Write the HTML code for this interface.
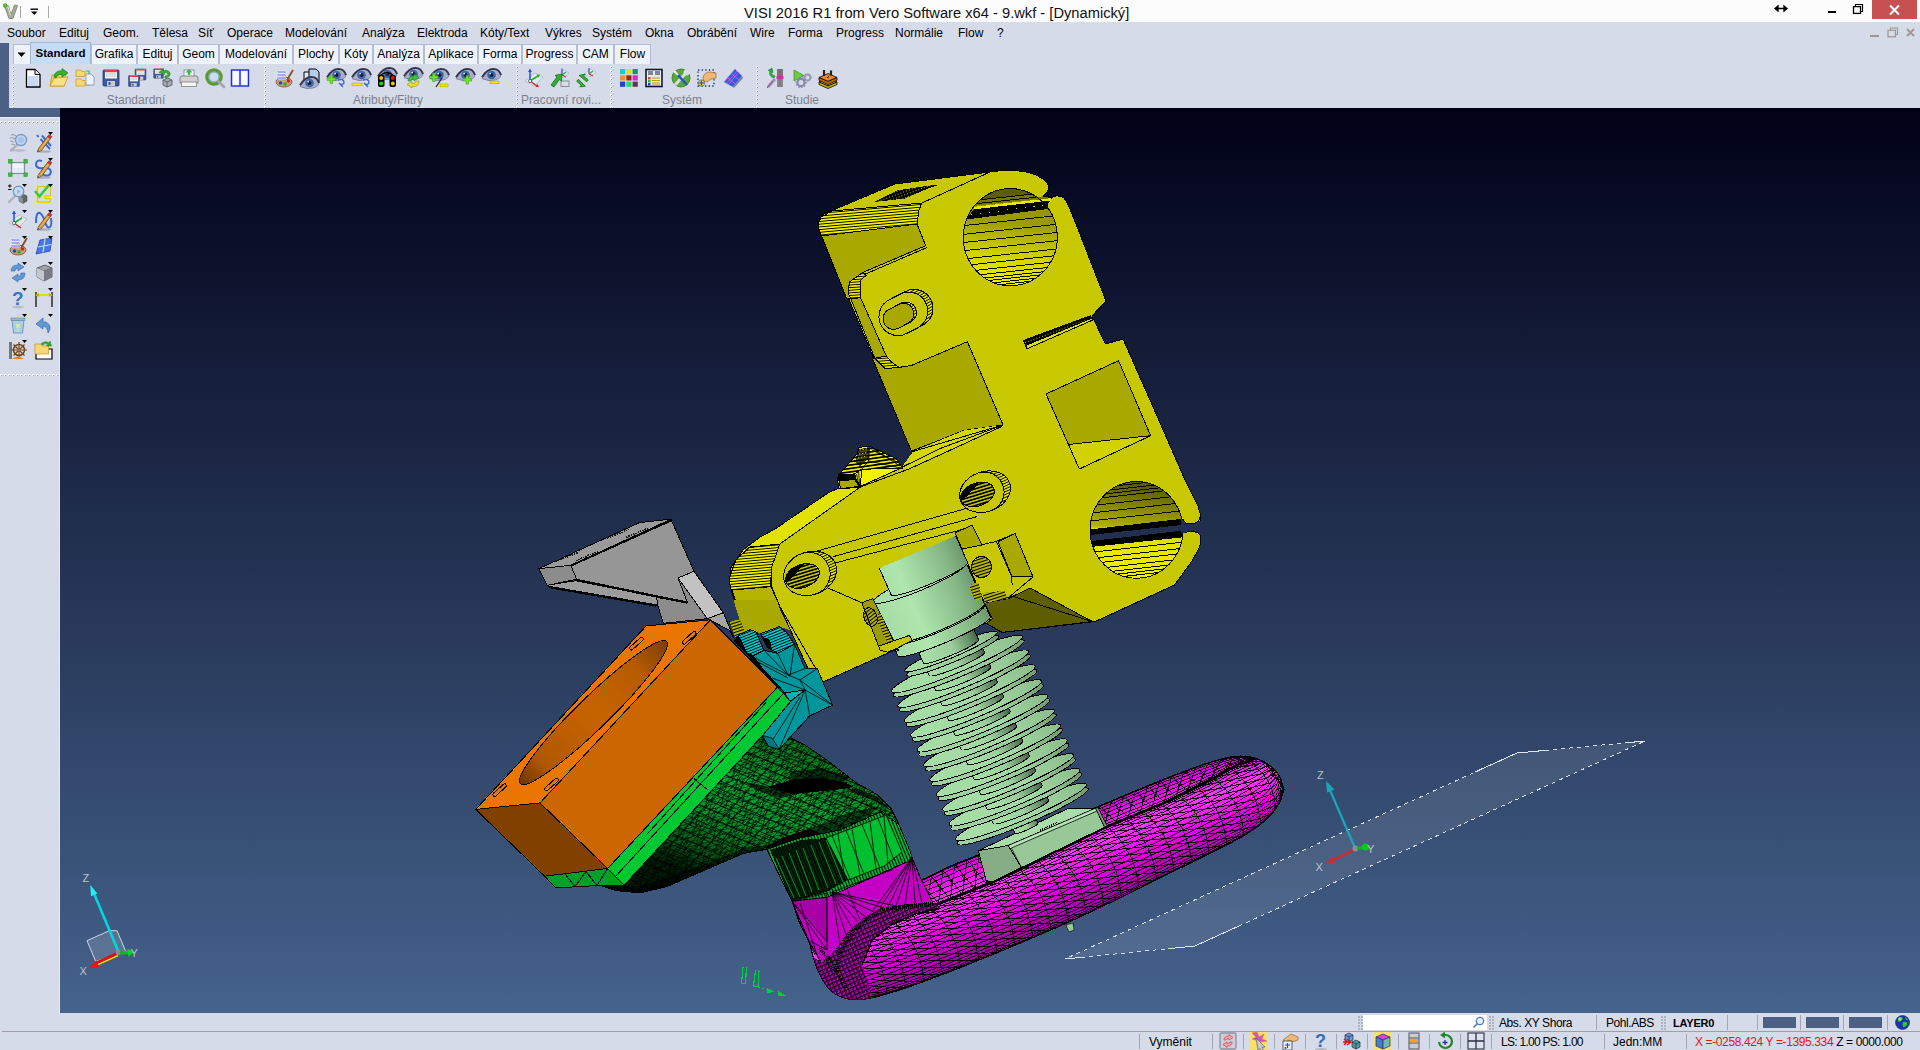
<!DOCTYPE html>
<html lang="cs">
<head>
<meta charset="utf-8">
<title>VISI 2016 R1 from Vero Software x64 - 9.wkf - [Dynamický]</title>
<style>
html,body{margin:0;padding:0;}
body{width:1920px;height:1050px;overflow:hidden;position:relative;background:#d6dbe9;font-family:"Liberation Sans","DejaVu Sans",sans-serif;font-size:12px;color:#000;}
.abs{position:absolute;}
#titlebar{left:0;top:0;width:1920px;height:22px;background:#fcfcfc;}
#title{left:744px;top:3px;font-size:14.7px;line-height:20px;color:#111;white-space:nowrap;}
.mi{position:absolute;top:26px;font-size:12px;line-height:14px;white-space:nowrap;color:#000;}
#leftstrip{left:0;top:43px;width:9px;height:65px;background:#4c6086;}
#leftpaneltop{left:0;top:108px;width:60px;height:9px;background:#4c6086;}
.tab{position:absolute;top:44px;height:20px;border:1px solid #b4bdd2;border-bottom:none;background:#eef3fb;font-size:12px;line-height:19px;text-align:center;white-space:nowrap;box-sizing:border-box;overflow:visible;}
.tab.sel{background:#c4dcf6;border-color:#a3b6cf;font-weight:bold;font-size:11.5px;top:42px;height:22px;line-height:20px;}
.grp{position:absolute;top:93px;font-size:12px;line-height:14px;color:#7c7f8a;white-space:nowrap;}
.grip{position:absolute;top:66px;width:2px;height:42px;background-image:repeating-linear-gradient(to bottom,rgba(0,0,0,0) 0,rgba(0,0,0,0) 2px,#d6dbe9 2px,#d6dbe9 4px),linear-gradient(135deg,#fff 50%,#9aa0b0 50%);background-size:auto,2px 2px;}
.hgrip{position:absolute;left:0;width:59px;height:2px;background-image:repeating-linear-gradient(to right,rgba(0,0,0,0) 0,rgba(0,0,0,0) 2px,#d6dbe9 2px,#d6dbe9 4px),linear-gradient(135deg,#fff 50%,#9aa0b0 50%);background-size:auto,2px 2px;}
#viewport{left:60px;top:108px;width:1860px;height:905px;background:linear-gradient(to bottom,#010118 0%,#45638c 100%);overflow:hidden;}
#statussep{left:2px;top:1031px;width:1918px;height:1px;background:#a0a0a0;}
.st{position:absolute;font-size:12px;line-height:14px;white-space:nowrap;}
.vsep{position:absolute;width:1px;height:15px;background:#a3a7b3;}
.sgrip{position:absolute;width:5px;height:14px;background-image:radial-gradient(circle at 1px 1px,#aeb3c2 0.7px,rgba(0,0,0,0) 1px);background-size:3px 3px;}
.brect{position:absolute;top:1017px;width:33px;height:11px;background:#4c6086;}
.ic{position:absolute;overflow:visible;}
</style>
</head>
<body>
<div id="titlebar" class="abs"></div>
<div id="title" class="abs">VISI 2016 R1 from Vero Software x64 - 9.wkf - [Dynamický]</div>
<div class="mi" style="left:7px">Soubor</div>
<div class="mi" style="left:59px">Edituj</div>
<div class="mi" style="left:103px">Geom.</div>
<div class="mi" style="left:152px">Tělesa</div>
<div class="mi" style="left:198px">Síť</div>
<div class="mi" style="left:227px">Operace</div>
<div class="mi" style="left:285px">Modelování</div>
<div class="mi" style="left:362px">Analýza</div>
<div class="mi" style="left:417px">Elektroda</div>
<div class="mi" style="left:480px">Kóty/Text</div>
<div class="mi" style="left:545px">Výkres</div>
<div class="mi" style="left:592px">Systém</div>
<div class="mi" style="left:645px">Okna</div>
<div class="mi" style="left:687px">Obrábění</div>
<div class="mi" style="left:750px">Wire</div>
<div class="mi" style="left:788px">Forma</div>
<div class="mi" style="left:836px">Progress</div>
<div class="mi" style="left:895px">Normálie</div>
<div class="mi" style="left:958px">Flow</div>
<div class="mi" style="left:997px">?</div>
<div id="leftstrip" class="abs"></div>
<div id="leftpaneltop" class="abs"></div>
<div class="tab" style="left:13px;width:18px;"></div>
<div class="tab sel" style="left:30px;width:61px">Standard</div>
<div class="tab" style="left:91px;width:46px">Grafika</div>
<div class="tab" style="left:137px;width:41px">Edituj</div>
<div class="tab" style="left:178px;width:41px">Geom</div>
<div class="tab" style="left:219px;width:74px">Modelování</div>
<div class="tab" style="left:293px;width:46px">Plochy</div>
<div class="tab" style="left:339px;width:34px">Kóty</div>
<div class="tab" style="left:373px;width:51px">Analýza</div>
<div class="tab" style="left:424px;width:54px">Aplikace</div>
<div class="tab" style="left:478px;width:44px">Forma</div>
<div class="tab" style="left:522px;width:55px">Progress</div>
<div class="tab" style="left:577px;width:37px">CAM</div>
<div class="tab" style="left:614px;width:37px">Flow</div>
<div class="grip" style="left:12px"></div>
<div class="grip" style="left:264px"></div>
<div class="grip" style="left:516px"></div>
<div class="grip" style="left:610px"></div>
<div class="grip" style="left:756px"></div>
<div class="grp" style="left:76px;width:120px;text-align:center">Standardní</div>
<div class="grp" style="left:328px;width:120px;text-align:center">Atributy/Filtry</div>
<div class="grp" style="left:501px;width:120px;text-align:center">Pracovní rovi...</div>
<div class="grp" style="left:622px;width:120px;text-align:center">Systém</div>
<div class="grp" style="left:742px;width:120px;text-align:center">Studie</div>
<div class="hgrip" style="top:121px"></div><div class="hgrip" style="top:374px"></div><div class="abs" style="left:59px;top:117px;width:1px;height:896px;background:#e6eaf4"></div><div class="abs" style="left:0;top:117px;width:60px;height:1px;background:#e6eaf4"></div>
<div id="statussep" class="abs"></div>
<div class="sgrip" style="left:1358px;top:1016px"></div><div class="abs" style="left:1363px;top:1015px;width:124px;height:15px;background:#fff"></div><div class="sgrip" style="left:1489px;top:1016px"></div>
<div class="st" style="left:1499px;top:1016px;letter-spacing:-0.42px">Abs. XY Shora</div>
<div class="vsep" style="left:1596px;top:1015px"></div>
<div class="st" style="left:1606px;top:1016px;letter-spacing:-0.43px">Pohl.ABS</div>
<div class="sgrip" style="left:1661px;top:1016px"></div>
<div class="st" style="left:1673px;top:1016px;font-weight:bold;font-size:11px;letter-spacing:-0.2px">LAYER0</div>
<div class="vsep" style="left:1727px;top:1015px"></div>
<div class="vsep" style="left:1757px;top:1015px"></div>
<div class="vsep" style="left:1800px;top:1015px"></div>
<div class="vsep" style="left:1843px;top:1015px"></div>
<div class="vsep" style="left:1887px;top:1015px"></div>
<div class="brect" style="left:1763px"></div>
<div class="brect" style="left:1806px"></div>
<div class="brect" style="left:1849px"></div>
<div class="vsep" style="left:1139px;top:1034px"></div>
<div class="vsep" style="left:1212px;top:1034px"></div>
<div class="vsep" style="left:1243px;top:1034px"></div>
<div class="vsep" style="left:1274px;top:1034px"></div>
<div class="vsep" style="left:1305px;top:1034px"></div>
<div class="vsep" style="left:1336px;top:1034px"></div>
<div class="vsep" style="left:1367px;top:1034px"></div>
<div class="vsep" style="left:1398px;top:1034px"></div>
<div class="vsep" style="left:1429px;top:1034px"></div>
<div class="vsep" style="left:1460px;top:1034px"></div>
<div class="vsep" style="left:1491px;top:1034px"></div>
<div class="vsep" style="left:1604px;top:1034px"></div>
<div class="vsep" style="left:1686px;top:1034px"></div>
<div class="st" style="left:1149px;top:1035px">Vyměnit</div>
<div class="st" style="left:1501px;top:1035px;letter-spacing:-0.72px">LS: 1.00 PS: 1.00</div>
<div class="st" style="left:1613px;top:1035px">Jedn:MM</div>
<div class="st" style="left:1695px;top:1035px;letter-spacing:-0.38px"><span style="color:#e8141c">X =-0258.424 Y =-1395.334</span> Z = 0000.000</div>
<div id="viewport" class="abs"><svg width="1860" height="905" viewBox="60 108 1860 905" style="position:absolute;left:0;top:0" shape-rendering="crispEdges"><defs>
<pattern id="hY" width="6" height="2.700" patternUnits="userSpaceOnUse" patternTransform="rotate(-5)"><rect width="6" height="2.700" fill="#ecec00"/><rect y="0" width="6" height="1.200" fill="#000"/></pattern>
<pattern id="hY2" width="6" height="2.600" patternUnits="userSpaceOnUse" patternTransform="rotate(-4)"><rect width="6" height="2.600" fill="#e4e400"/><rect y="0" width="6" height="1.100" fill="#000"/></pattern>
<pattern id="hD" width="3" height="3" patternUnits="userSpaceOnUse" patternTransform="rotate(-20)"><rect width="3" height="3" fill="#000"/><rect x="0" y="0" width="1" height="1" fill="#c8c800"/></pattern>
<pattern id="hHole" width="8" height="6" patternUnits="userSpaceOnUse" patternTransform="rotate(-11)"><rect y="0" width="8" height="1" fill="#000"/></pattern>
<pattern id="hScrew" width="8" height="3" patternUnits="userSpaceOnUse" patternTransform="rotate(-18)"><rect width="8" height="3" fill="#b4b400"/><rect y="0" width="8" height="1.3" fill="#000"/></pattern>
<linearGradient id="gHole1" x1="0" y1="0" x2="0.15" y2="1"><stop offset="0" stop-color="#7a7a00"/><stop offset="0.22" stop-color="#8c8c00"/><stop offset="0.4" stop-color="#a6a600"/><stop offset="0.65" stop-color="#d2d200"/><stop offset="1" stop-color="#f0f000"/></linearGradient>
<linearGradient id="gCyl" gradientUnits="userSpaceOnUse" x1="880" y1="620" x2="990" y2="574"><stop offset="0" stop-color="#a4dca4"/><stop offset="0.3" stop-color="#aee6ae"/><stop offset="0.7" stop-color="#86b886"/><stop offset="1" stop-color="#567e56"/></linearGradient>
<linearGradient id="gOr" gradientUnits="userSpaceOnUse" x1="560" y1="700" x2="640" y2="740"><stop offset="0" stop-color="#9a4d00"/><stop offset="1" stop-color="#c86400"/></linearGradient>
<pattern id="mG" width="7.500" height="7.500" patternUnits="userSpaceOnUse" patternTransform="rotate(24) skewX(-18)"><path d="M0 0H7.500M0 0V7.500M0 7.500L7.500 0" stroke="#000" stroke-width="0.800" fill="none"/></pattern><pattern id="mG3" width="17" height="11" patternUnits="userSpaceOnUse" patternTransform="rotate(-14)"><path d="M0 0L17 11M0 5.500L8.500 0M8.500 11L17 5.500M0 11L6 0M11 11L17 0" stroke="#000" stroke-width="0.800" fill="none"/></pattern>
<pattern id="mG2" width="3" height="8" patternUnits="userSpaceOnUse" patternTransform="rotate(-22)"><rect width="3" height="8" fill="#00b82e"/><path d="M0 0V8" stroke="#000" stroke-width="1.3" fill="none"/></pattern>
<pattern id="mM" width="7" height="7" patternUnits="userSpaceOnUse" patternTransform="rotate(-24)"><rect width="7" height="7" fill="#e000e0"/><path d="M0 0H7M0 0V7M0 7L7 0" stroke="#000" stroke-width="0.9" fill="none"/></pattern>
<pattern id="mM2" width="4" height="4" patternUnits="userSpaceOnUse" patternTransform="rotate(-24)"><rect width="4" height="4" fill="#c000c0"/><path d="M0 0H4M0 0V4M0 4L4 0" stroke="#000" stroke-width="0.9" fill="none"/></pattern>
<radialGradient id="gRing" gradientUnits="userSpaceOnUse" cx="1060" cy="860" r="260" gradientTransform="translate(1060 860) rotate(-24) scale(1 0.25) translate(-1060 -860)"><stop offset="0" stop-color="#ff30ff" stop-opacity="0.55"/><stop offset="1" stop-color="#a000a0" stop-opacity="0.35"/></radialGradient>
<linearGradient id="gFin" x1="0" y1="0" x2="1" y2="0"><stop offset="0" stop-color="#a6dea6"/><stop offset="0.6" stop-color="#a2d8a2"/><stop offset="1" stop-color="#8abc8a"/></linearGradient>
<linearGradient id="gCore" x1="0" y1="0.3" x2="1" y2="0"><stop offset="0" stop-color="#a6dea6"/><stop offset="0.45" stop-color="#9ace9a"/><stop offset="0.75" stop-color="#668e66"/><stop offset="1" stop-color="#2a422c"/></linearGradient>
<linearGradient id="gRim" x1="0" y1="0" x2="1" y2="0"><stop offset="0" stop-color="#9ed29e"/><stop offset="0.7" stop-color="#98cc98"/><stop offset="1" stop-color="#6c9a6c"/></linearGradient>
<linearGradient id="gOrH" x1="0" y1="0" x2="1" y2="0"><stop offset="0" stop-color="#6e3600"/><stop offset="0.15" stop-color="#b05800"/><stop offset="0.5" stop-color="#c66300"/><stop offset="0.8" stop-color="#b65b00"/><stop offset="1" stop-color="#7e3e00"/></linearGradient>
<linearGradient id="gRingHi" gradientUnits="userSpaceOnUse" x1="1000" y1="850" x2="1030" y2="925"><stop offset="0" stop-color="#e000e0"/><stop offset="0.35" stop-color="#ff38ff"/><stop offset="0.7" stop-color="#e000e0"/><stop offset="1" stop-color="#a800a8"/></linearGradient>
<pattern id="mC" width="6" height="2.6" patternUnits="userSpaceOnUse" patternTransform="rotate(-22)"><rect width="6" height="2.6" fill="#00c4cc"/><rect width="6" height="1.3" fill="#000"/></pattern>
<pattern id="hScrew0" width="8" height="3.2" patternUnits="userSpaceOnUse" patternTransform="rotate(3)"><rect width="8" height="3.2" fill="#c0c000"/><rect y="0" width="8" height="1.900" fill="#000"/></pattern>
<linearGradient id="gDuct" gradientUnits="userSpaceOnUse" x1="775" y1="745" x2="725" y2="885"><stop offset="0" stop-color="#00801e"/><stop offset="0.3" stop-color="#00a630"/><stop offset="0.55" stop-color="#00982c"/><stop offset="0.8" stop-color="#006418"/><stop offset="1" stop-color="#001c06"/></linearGradient>
<pattern id="hPyr" width="8" height="3.400" patternUnits="userSpaceOnUse" patternTransform="rotate(-8)"><rect width="8" height="3.400" fill="#f0f000"/><rect width="8" height="1.400" fill="#000"/></pattern>
<linearGradient id="gHoleA" x1="0.1" y1="0" x2="0" y2="1"><stop offset="0" stop-color="#8e8e00"/><stop offset="0.3" stop-color="#9c9c00"/><stop offset="0.45" stop-color="#b4b400"/><stop offset="0.65" stop-color="#d2d200"/><stop offset="0.85" stop-color="#e6e600"/><stop offset="1" stop-color="#f0f000"/></linearGradient>
<linearGradient id="gHoleB" x1="0.1" y1="0" x2="0" y2="1"><stop offset="0" stop-color="#5a5a00"/><stop offset="0.15" stop-color="#787800"/><stop offset="0.3" stop-color="#949400"/><stop offset="0.45" stop-color="#b0b000"/><stop offset="0.5" stop-color="#e0e000"/><stop offset="1" stop-color="#f2f200"/></linearGradient>
</defs>
<!-- work plane -->
<g id="plane">
<polygon points="1065,959 1195,946 1645,741 1517,753" fill="#ffffff" fill-opacity="0.09" stroke="none"/>
<path d="M1065 959L1195 946M1195 946L1645 741M1645 741L1517 753M1517 753L1065 959" stroke="#d8dce4" stroke-width="1" stroke-dasharray="4 4" fill="none"/>
<path d="M1065 959L1085 957M1170 948.5L1195 946L1240 925.5M1645 741L1625 743M1545 750.5L1517 753L1475 772" stroke="#dfe3ea" stroke-width="1" fill="none"/>
</g>
<g id="ring">
<clipPath id="cRing"><path d="M792.0 901.0 L795.0 900.4 L801.0 899.3 L810.0 897.6 L822.0 895.4 L833.5 893.4 L844.5 891.8 L855.0 890.5 L865.0 889.5 L875.0 888.4 L885.0 887.1 L894.9 885.7 L904.9 884.2 L914.0 882.1 L922.2 879.6 L929.5 876.5 L936.0 873.0 L943.0 869.5 L950.5 866.1 L958.5 862.7 L967.0 859.5 L977.1 855.5 L988.9 850.8 L1002.3 845.4 L1017.4 839.2 L1032.2 833.2 L1046.9 827.3 L1061.3 821.4 L1075.6 815.8 L1088.8 810.4 L1101.1 805.3 L1112.5 800.6 L1122.9 796.1 L1134.0 791.5 L1145.7 786.7 L1158.0 781.7 L1171.1 776.4 L1183.1 771.8 L1194.2 767.7 L1204.3 764.2 L1213.4 761.3 L1221.6 759.0 L1228.7 757.4 L1234.9 756.4 L1240.1 756.1 L1245.1 756.2 L1250.0 756.9 L1254.7 758.0 L1259.3 759.7 L1263.5 761.6 L1267.4 763.9 L1271.0 766.5 L1274.3 769.5 L1277.0 772.7 L1279.3 776.1 L1281.0 779.7 L1282.1 783.7 L1283.0 786.6 L1283.6 788.5 L1283.9 789.5 L1283.6 790.5 L1283.0 792.4 L1282.1 795.3 L1281.0 799.3 L1279.1 803.3 L1276.6 807.5 L1273.3 811.9 L1269.4 816.5 L1264.3 821.2 L1258.1 826.1 L1250.8 831.1 L1242.4 836.4 L1232.0 842.2 L1219.6 848.7 L1205.3 855.9 L1189.0 863.7 L1171.9 872.0 L1154.0 880.8 L1135.3 890.1 L1115.8 899.8 L1096.3 909.3 L1076.7 918.4 L1057.2 927.2 L1037.6 935.6 L1018.1 943.9 L998.5 952.1 L979.0 960.0 L959.5 967.9 L941.6 974.8 L925.3 980.9 L910.7 986.2 L897.6 990.6 L886.2 994.1 L876.4 996.8 L868.1 998.6 L861.5 999.6 L855.2 999.8 L849.4 999.3 L844.0 998.0 L839.0 996.0 L834.6 993.5 L830.7 990.5 L827.4 987.0 L824.6 983.0 L822.1 978.9 L819.9 974.7 L817.9 970.4 L816.1 966.1 L814.6 961.6 L813.2 957.2 L812.0 952.7 L811.0 948.1 L809.7 943.7 L808.0 939.4 L805.9 935.2 L803.6 931.1 L801.3 926.6 L799.1 921.5 L797.0 916.0 L795.0 910.0 L793.5 905.5 L792.5 902.5 L792.0 901.0 Z"/></clipPath>
<path d="M792.0 901.0 L795.0 900.4 L801.0 899.3 L810.0 897.6 L822.0 895.4 L833.5 893.4 L844.5 891.8 L855.0 890.5 L865.0 889.5 L875.0 888.4 L885.0 887.1 L894.9 885.7 L904.9 884.2 L914.0 882.1 L922.2 879.6 L929.5 876.5 L936.0 873.0 L943.0 869.5 L950.5 866.1 L958.5 862.7 L967.0 859.5 L977.1 855.5 L988.9 850.8 L1002.3 845.4 L1017.4 839.2 L1032.2 833.2 L1046.9 827.3 L1061.3 821.4 L1075.6 815.8 L1088.8 810.4 L1101.1 805.3 L1112.5 800.6 L1122.9 796.1 L1134.0 791.5 L1145.7 786.7 L1158.0 781.7 L1171.1 776.4 L1183.1 771.8 L1194.2 767.7 L1204.3 764.2 L1213.4 761.3 L1221.6 759.0 L1228.7 757.4 L1234.9 756.4 L1240.1 756.1 L1245.1 756.2 L1250.0 756.9 L1254.7 758.0 L1259.3 759.7 L1263.5 761.6 L1267.4 763.9 L1271.0 766.5 L1274.3 769.5 L1277.0 772.7 L1279.3 776.1 L1281.0 779.7 L1282.1 783.7 L1283.0 786.6 L1283.6 788.5 L1283.9 789.5 L1283.6 790.5 L1283.0 792.4 L1282.1 795.3 L1281.0 799.3 L1279.1 803.3 L1276.6 807.5 L1273.3 811.9 L1269.4 816.5 L1264.3 821.2 L1258.1 826.1 L1250.8 831.1 L1242.4 836.4 L1232.0 842.2 L1219.6 848.7 L1205.3 855.9 L1189.0 863.7 L1171.9 872.0 L1154.0 880.8 L1135.3 890.1 L1115.8 899.8 L1096.3 909.3 L1076.7 918.4 L1057.2 927.2 L1037.6 935.6 L1018.1 943.9 L998.5 952.1 L979.0 960.0 L959.5 967.9 L941.6 974.8 L925.3 980.9 L910.7 986.2 L897.6 990.6 L886.2 994.1 L876.4 996.8 L868.1 998.6 L861.5 999.6 L855.2 999.8 L849.4 999.3 L844.0 998.0 L839.0 996.0 L834.6 993.5 L830.7 990.5 L827.4 987.0 L824.6 983.0 L822.1 978.9 L819.9 974.7 L817.9 970.4 L816.1 966.1 L814.6 961.6 L813.2 957.2 L812.0 952.7 L811.0 948.1 L809.7 943.7 L808.0 939.4 L805.9 935.2 L803.6 931.1 L801.3 926.6 L799.1 921.5 L797.0 916.0 L795.0 910.0 L793.5 905.5 L792.5 902.5 L792.0 901.0 Z" fill="#d400d4" stroke="none"/>
<g clip-path="url(#cRing)">
<path d="M792.0 901.0 L795.0 900.4 L801.0 899.3 L810.0 897.6 L822.0 895.4 L833.5 893.4 L844.5 891.8 L855.0 890.5 L865.0 889.5 L875.0 888.4 L885.0 887.1 L894.9 885.7 L904.9 884.2 L914.0 882.1 L922.2 879.6 L929.5 876.5 L936.0 873.0 L943.0 869.5 L950.5 866.1 L958.5 862.7 L967.0 859.5 L977.1 855.5 L988.9 850.8 L1002.3 845.4 L1017.4 839.2 L1032.2 833.2 L1046.9 827.3 L1061.3 821.4 L1075.6 815.8 L1088.8 810.4 L1101.1 805.3 L1112.5 800.6 L1122.9 796.1 L1134.0 791.5 L1145.7 786.7 L1158.0 781.7 L1171.1 776.4 L1183.1 771.8 L1194.2 767.7 L1204.3 764.2 L1213.4 761.3 L1221.6 759.0 L1228.7 757.4 L1234.9 756.4 L1240.1 756.1 L1245.1 756.2 L1250.0 756.9 L1254.7 758.0 L1259.3 759.7 L1263.5 761.6 L1267.4 763.9 L1271.0 766.5 L1274.3 769.5 L1277.0 772.7 L1279.3 776.1 L1281.0 779.7 L1282.1 783.7 L1283.0 786.6 L1283.6 788.5 L1283.9 789.5 L1283.6 790.5 L1283.0 792.4 L1282.1 795.3 L1281.0 799.3 L1279.1 803.3 L1276.6 807.5 L1273.3 811.9 L1269.4 816.5 L1264.3 821.2 L1258.1 826.1 L1250.8 831.1 L1242.4 836.4 L1232.0 842.2 L1219.6 848.7 L1205.3 855.9 L1189.0 863.7 L1171.9 872.0 L1154.0 880.8 L1135.3 890.1 L1115.8 899.8 L1096.3 909.3 L1076.7 918.4 L1057.2 927.2 L1037.6 935.6 L1018.1 943.9 L998.5 952.1 L979.0 960.0 L959.5 967.9 L941.6 974.8 L925.3 980.9 L910.7 986.2 L897.6 990.6 L886.2 994.1 L876.4 996.8 L868.1 998.6 L861.5 999.6 L855.2 999.8 L849.4 999.3 L844.0 998.0 L839.0 996.0 L834.6 993.5 L830.7 990.5 L827.4 987.0 L824.6 983.0 L822.1 978.9 L819.9 974.7 L817.9 970.4 L816.1 966.1 L814.6 961.6 L813.2 957.2 L812.0 952.7 L811.0 948.1 L809.7 943.7 L808.0 939.4 L805.9 935.2 L803.6 931.1 L801.3 926.6 L799.1 921.5 L797.0 916.0 L795.0 910.0 L793.5 905.5 L792.5 902.5 L792.0 901.0 Z" fill="url(#gRingHi)" stroke="none"/>
<path d="M832.9 946.1 L840.4 943.1 L847.9 940.1 L855.4 937.1 L862.9 934.0 L870.4 931.0 L877.9 928.0 L885.4 925.0 L892.9 921.9 L900.4 918.9 L907.9 915.9 L915.4 912.9 L922.9 909.8 L930.5 906.9 L938.0 903.9 L945.5 900.9 L953.0 897.9 L960.5 894.9 L968.0 891.9 L975.5 888.9 L983.0 885.9 L990.5 882.9 L997.9 879.6 L1005.3 876.3 L1012.6 872.9 L1020.0 869.5 L1027.3 866.0 L1034.6 862.4 L1041.8 858.8 L1049.1 855.2 L1056.4 851.6 L1063.6 848.0 L1070.9 844.4 L1078.2 840.8 L1085.4 837.2 L1092.7 833.5 L1100.0 829.9 L1107.3 826.5 L1114.8 823.4 L1122.2 820.3 L1129.7 817.2 L1137.2 814.2 L1144.7 811.1 L1152.1 808.0 L1159.6 804.9 L1167.0 801.7 L1174.3 798.0 L1181.5 794.4 L1188.8 790.8 L1196.1 787.2 L1203.3 783.6 L1210.6 779.9 L1217.8 776.2 L1224.8 772.0 L1231.9 768.0 L1239.4 765.0 L1246.9 762.0 L1254.4 758.9 L1261.9 755.9 L1269.4 752.8 M833.2 946.9 L840.8 944.0 L848.3 941.0 L855.8 938.0 L863.3 935.0 L870.8 931.9 L878.3 928.9 L885.8 925.9 L893.3 922.9 L900.8 919.9 L908.3 916.8 L915.8 913.8 L923.3 910.8 L930.9 907.9 L938.4 904.9 L945.9 901.9 L953.4 898.9 L960.9 895.9 L968.4 892.9 L975.9 889.9 L983.4 886.9 L990.9 883.9 L998.3 880.6 L1005.7 877.2 L1013.0 873.8 L1020.4 870.5 L1027.7 866.9 L1034.9 863.3 L1042.2 859.7 L1049.5 856.1 L1056.8 852.5 L1064.0 848.9 L1071.3 845.3 L1078.6 841.7 L1085.8 838.1 L1093.1 834.5 L1100.4 830.9 L1107.7 827.5 L1115.2 824.4 L1122.6 821.3 L1130.1 818.2 L1137.6 815.1 L1145.0 812.0 L1152.5 808.9 L1160.0 805.8 L1167.4 802.6 L1174.7 799.0 L1181.9 795.4 L1189.2 791.7 L1196.4 788.1 L1203.7 784.5 L1210.9 780.9 L1218.2 777.2 L1225.2 772.9 L1232.3 768.9 L1239.8 765.9 L1247.3 762.8 L1254.7 759.7 L1262.2 756.5 L1269.6 753.3 M833.8 948.3 L841.3 945.4 L848.9 942.4 L856.4 939.4 L863.9 936.5 L871.4 933.5 L878.9 930.4 L886.4 927.4 L893.9 924.4 L901.4 921.4 L908.9 918.4 L916.4 915.4 L923.9 912.4 L931.5 909.5 L939.0 906.5 L946.5 903.5 L954.0 900.5 L961.5 897.5 L969.0 894.5 L976.5 891.5 L984.0 888.4 L991.5 885.4 L998.9 882.2 L1006.3 878.8 L1013.7 875.4 L1021.0 872.0 L1028.3 868.5 L1035.6 864.9 L1042.9 861.3 L1050.1 857.7 L1057.4 854.1 L1064.7 850.6 L1071.9 847.0 L1079.2 843.4 L1086.5 839.8 L1093.7 836.2 L1101.0 832.6 L1108.3 829.1 L1115.8 826.0 L1123.3 822.9 L1130.7 819.8 L1138.2 816.7 L1145.7 813.6 L1153.1 810.5 L1160.6 807.4 L1168.0 804.1 L1175.3 800.5 L1182.5 796.9 L1189.8 793.3 L1197.0 789.6 L1204.3 786.0 L1211.6 782.4 L1218.8 778.7 L1225.8 774.4 L1232.9 770.4 L1240.4 767.3 L1247.8 764.2 L1255.2 761.0 L1262.6 757.7 L1270.0 754.3 M834.5 950.1 L842.1 947.3 L849.7 944.4 L857.2 941.5 L864.7 938.5 L872.2 935.5 L879.8 932.5 L887.3 929.6 L894.8 926.6 L902.3 923.5 L909.8 920.5 L917.3 917.5 L924.8 914.5 L932.4 911.6 L939.9 908.6 L947.4 905.6 L954.9 902.6 L962.4 899.6 L969.9 896.6 L977.4 893.6 L984.9 890.6 L992.4 887.6 L999.8 884.3 L1007.2 880.9 L1014.5 877.6 L1021.9 874.2 L1029.2 870.7 L1036.5 867.1 L1043.7 863.5 L1051.0 859.9 L1058.3 856.4 L1065.6 852.8 L1072.8 849.2 L1080.1 845.6 L1087.4 842.0 L1094.6 838.4 L1101.9 834.8 L1109.2 831.3 L1116.7 828.2 L1124.1 825.1 L1131.6 822.0 L1139.1 818.8 L1146.5 815.7 L1154.0 812.6 L1161.5 809.5 L1168.9 806.2 L1176.1 802.6 L1183.4 799.0 L1190.6 795.4 L1197.9 791.7 L1205.1 788.1 L1212.4 784.5 L1219.6 780.7 L1226.6 776.5 L1233.7 772.5 L1241.2 769.3 L1248.6 766.1 L1255.9 762.7 L1263.3 759.2 L1270.5 755.5 M835.5 952.4 L843.1 949.7 L850.7 946.9 L858.2 944.0 L865.8 941.1 L873.3 938.1 L880.8 935.2 L888.3 932.2 L895.9 929.2 L903.4 926.2 L910.9 923.2 L918.4 920.2 L925.9 917.2 L933.4 914.3 L940.9 911.3 L948.5 908.3 L956.0 905.3 L963.5 902.3 L971.0 899.3 L978.5 896.3 L986.0 893.3 L993.5 890.2 L1000.9 887.0 L1008.3 883.6 L1015.6 880.3 L1023.0 876.9 L1030.3 873.4 L1037.6 869.8 L1044.9 866.3 L1052.1 862.7 L1059.4 859.1 L1066.7 855.5 L1074.0 852.0 L1081.2 848.4 L1088.5 844.8 L1095.8 841.2 L1103.0 837.6 L1110.4 834.1 L1117.8 831.0 L1125.3 827.8 L1132.7 824.7 L1140.2 821.5 L1147.6 818.4 L1155.1 815.2 L1162.5 812.1 L1169.9 808.8 L1177.2 805.2 L1184.4 801.6 L1191.7 798.0 L1199.0 794.4 L1206.2 790.7 L1213.4 787.1 L1220.7 783.3 L1227.7 779.1 L1234.8 775.0 L1242.2 771.8 L1249.5 768.4 L1256.8 764.9 L1264.1 761.2 L1271.1 757.1 M836.6 955.1 L844.2 952.6 L851.9 949.8 L859.4 947.0 L867.0 944.1 L874.5 941.2 L882.1 938.3 L889.6 935.3 L897.1 932.3 L904.6 929.4 L912.1 926.4 L919.7 923.4 L927.2 920.4 L934.7 917.5 L942.2 914.5 L949.7 911.5 L957.2 908.5 L964.7 905.4 L972.2 902.4 L979.8 899.4 L987.3 896.4 L994.8 893.4 L1002.2 890.1 L1009.5 886.8 L1016.9 883.4 L1024.3 880.1 L1031.6 876.6 L1038.9 873.1 L1046.2 869.5 L1053.4 865.9 L1060.7 862.4 L1068.0 858.8 L1075.3 855.2 L1082.6 851.6 L1089.8 848.1 L1097.1 844.5 L1104.4 840.8 L1111.7 837.4 L1119.1 834.2 L1126.6 831.0 L1134.0 827.9 L1141.4 824.7 L1148.9 821.5 L1156.3 818.4 L1163.8 815.2 L1171.2 811.9 L1178.4 808.3 L1185.7 804.7 L1192.9 801.1 L1200.2 797.5 L1207.4 793.8 L1214.7 790.1 L1221.9 786.4 L1228.9 782.1 L1236.0 778.1 L1243.3 774.7 L1250.6 771.2 L1257.9 767.5 L1265.0 763.5 L1271.9 758.9 M837.8 958.2 L845.5 955.8 L853.2 953.1 L860.8 950.4 L868.4 947.5 L875.9 944.7 L883.5 941.8 L891.0 938.8 L898.5 935.9 L906.1 932.9 L913.6 929.9 L921.1 926.9 L928.6 923.9 L936.2 921.0 L943.7 918.0 L951.2 915.0 L958.7 912.0 L966.2 909.0 L973.7 906.0 L981.2 903.0 L988.7 900.0 L996.2 896.9 L1003.6 893.7 L1011.0 890.4 L1018.4 887.0 L1025.7 883.7 L1033.0 880.2 L1040.3 876.7 L1047.6 873.2 L1054.9 869.6 L1062.2 866.1 L1069.5 862.5 L1076.8 858.9 L1084.0 855.4 L1091.3 851.8 L1098.6 848.2 L1105.9 844.6 L1113.2 841.1 L1120.6 837.9 L1128.0 834.7 L1135.5 831.5 L1142.9 828.3 L1150.3 825.1 L1157.7 821.9 L1165.2 818.7 L1172.6 815.4 L1179.8 811.8 L1187.1 808.2 L1194.4 804.6 L1201.6 801.0 L1208.9 797.3 L1216.1 793.6 L1223.3 789.9 L1230.3 785.6 L1237.4 781.5 L1244.7 778.0 L1251.9 774.4 L1259.1 770.4 L1266.0 766.1 L1272.7 761.1 M839.2 961.6 L847.0 959.3 L854.7 956.8 L862.3 954.1 L869.9 951.3 L877.5 948.5 L885.0 945.6 L892.6 942.7 L900.1 939.8 L907.6 936.8 L915.2 933.8 L922.7 930.9 L930.2 927.9 L937.7 925.0 L945.3 922.0 L952.8 919.0 L960.3 916.0 L967.8 913.0 L975.3 909.9 L982.8 906.9 L990.3 903.9 L997.8 900.9 L1005.2 897.6 L1012.6 894.3 L1019.9 891.0 L1027.3 887.6 L1034.6 884.2 L1042.0 880.7 L1049.3 877.2 L1056.6 873.7 L1063.8 870.1 L1071.1 866.6 L1078.4 863.0 L1085.7 859.4 L1093.0 855.8 L1100.2 852.3 L1107.5 848.6 L1114.8 845.1 L1122.2 841.9 L1129.6 838.7 L1137.1 835.4 L1144.5 832.2 L1151.9 829.0 L1159.3 825.8 L1166.7 822.6 L1174.1 819.2 L1181.4 815.6 L1188.7 812.1 L1195.9 808.4 L1203.2 804.8 L1210.4 801.1 L1217.6 797.4 L1224.8 793.6 L1231.8 789.4 L1238.9 785.2 L1246.1 781.6 L1253.3 777.8 L1260.3 773.6 L1267.2 769.0 L1273.6 763.4 M840.6 965.2 L848.5 963.1 L856.2 960.7 L863.9 958.1 L871.5 955.3 L879.1 952.5 L886.7 949.7 L894.2 946.8 L901.8 943.9 L909.3 941.0 L916.8 938.0 L924.4 935.1 L931.9 932.1 L939.4 929.2 L946.9 926.2 L954.5 923.2 L962.0 920.2 L969.5 917.1 L977.0 914.1 L984.5 911.1 L992.0 908.1 L999.5 905.0 L1006.9 901.8 L1014.3 898.5 L1021.6 895.2 L1029.0 891.9 L1036.4 888.4 L1043.7 885.0 L1051.0 881.5 L1058.3 878.0 L1065.6 874.4 L1072.9 870.9 L1080.2 867.4 L1087.4 863.8 L1094.7 860.2 L1102.0 856.6 L1109.3 853.0 L1116.6 849.5 L1124.0 846.2 L1131.4 842.9 L1138.8 839.7 L1146.2 836.4 L1153.6 833.2 L1161.0 829.9 L1168.4 826.7 L1175.8 823.3 L1183.0 819.7 L1190.3 816.2 L1197.6 812.5 L1204.8 808.9 L1212.1 805.2 L1219.3 801.5 L1226.5 797.7 L1233.5 793.4 L1240.5 789.2 L1247.7 785.5 L1254.8 781.5 L1261.7 777.1 L1268.4 772.0 L1274.6 765.8 M842.1 969.0 L850.1 967.1 L857.9 964.7 L865.6 962.2 L873.2 959.5 L880.8 956.8 L888.4 954.0 L896.0 951.1 L903.5 948.2 L911.1 945.3 L918.6 942.4 L926.1 939.4 L933.7 936.5 L941.2 933.5 L948.7 930.6 L956.2 927.5 L963.7 924.5 L971.2 921.5 L978.7 918.5 L986.2 915.5 L993.7 912.4 L1001.2 909.4 L1008.6 906.1 L1016.0 902.9 L1023.4 899.6 L1030.8 896.3 L1038.1 892.9 L1045.5 889.4 L1052.8 885.9 L1060.1 882.4 L1067.4 878.9 L1074.7 875.4 L1082.0 871.9 L1089.3 868.3 L1096.6 864.7 L1103.8 861.1 L1111.1 857.5 L1118.4 854.0 L1125.8 850.7 L1133.2 847.4 L1140.5 844.1 L1147.9 840.8 L1155.3 837.5 L1162.7 834.2 L1170.1 830.9 L1177.5 827.6 L1184.8 824.0 L1192.0 820.4 L1199.3 816.8 L1206.5 813.2 L1213.8 809.5 L1221.0 805.8 L1228.2 801.9 L1235.2 797.7 L1242.2 793.4 L1249.3 789.5 L1256.4 785.4 L1263.2 780.6 L1269.7 775.2 L1275.7 768.4 M843.7 972.8 L851.7 971.1 L859.5 968.9 L867.3 966.4 L874.9 963.8 L882.6 961.1 L890.2 958.3 L897.7 955.5 L905.3 952.6 L912.9 949.8 L920.4 946.8 L927.9 943.9 L935.5 940.9 L943.0 938.0 L950.5 935.0 L958.0 932.0 L965.5 929.0 L973.0 926.0 L980.5 923.0 L988.0 919.9 L995.5 916.9 L1003.0 913.8 L1010.4 910.6 L1017.8 907.3 L1025.2 904.0 L1032.6 900.8 L1040.0 897.4 L1047.3 893.9 L1054.6 890.5 L1061.9 887.0 L1069.3 883.5 L1076.6 880.0 L1083.9 876.5 L1091.1 872.9 L1098.4 869.4 L1105.7 865.8 L1113.0 862.2 L1120.2 858.6 L1127.6 855.3 L1135.0 851.9 L1142.4 848.6 L1149.7 845.3 L1157.1 841.9 L1164.5 838.6 L1171.9 835.3 L1179.2 831.9 L1186.5 828.4 L1193.8 824.8 L1201.1 821.2 L1208.3 817.5 L1215.5 813.8 L1222.7 810.1 L1229.9 806.2 L1236.9 802.0 L1243.9 797.7 L1251.0 793.7 L1257.9 789.3 L1264.6 784.3 L1271.0 778.5 L1276.7 771.0 M845.2 976.6 L853.3 975.1 L861.2 973.0 L869.0 970.6 L876.7 968.1 L884.3 965.4 L891.9 962.7 L899.5 959.9 L907.1 957.1 L914.7 954.2 L922.2 951.3 L929.7 948.4 L937.3 945.4 L944.8 942.5 L952.3 939.5 L959.8 936.5 L967.3 933.5 L974.8 930.4 L982.3 927.4 L989.8 924.4 L997.3 921.3 L1004.8 918.2 L1012.2 915.0 L1019.6 911.8 L1027.0 908.5 L1034.4 905.2 L1041.8 901.9 L1049.1 898.5 L1056.5 895.0 L1063.8 891.6 L1071.1 888.1 L1078.4 884.6 L1085.7 881.1 L1093.0 877.6 L1100.3 874.0 L1107.6 870.4 L1114.8 866.8 L1122.1 863.2 L1129.5 859.9 L1136.8 856.5 L1144.2 853.1 L1151.5 849.7 L1158.9 846.4 L1166.3 843.0 L1173.6 839.7 L1181.0 836.3 L1188.3 832.7 L1195.6 829.2 L1202.8 825.5 L1210.1 821.9 L1217.3 818.2 L1224.5 814.4 L1231.6 810.6 L1238.6 806.3 L1245.6 802.0 L1252.7 797.8 L1259.5 793.2 L1266.1 787.9 L1272.3 781.7 L1277.8 773.6 M846.7 980.4 L854.9 979.0 L862.8 977.1 L870.6 974.8 L878.4 972.3 L886.0 969.7 L893.6 967.0 L901.3 964.2 L908.8 961.4 L916.4 958.5 L924.0 955.6 L931.5 952.7 L939.0 949.8 L946.6 946.8 L954.1 943.9 L961.6 940.9 L969.1 937.8 L976.6 934.8 L984.1 931.8 L991.6 928.7 L999.1 925.7 L1006.5 922.6 L1014.0 919.4 L1021.4 916.2 L1028.8 912.9 L1036.2 909.6 L1043.6 906.3 L1050.9 902.9 L1058.3 899.5 L1065.6 896.1 L1072.9 892.6 L1080.2 889.1 L1087.6 885.6 L1094.8 882.1 L1102.1 878.5 L1109.4 875.0 L1116.7 871.3 L1123.9 867.8 L1131.3 864.4 L1138.6 860.9 L1146.0 857.5 L1153.3 854.1 L1160.7 850.7 L1168.0 847.3 L1175.4 844.0 L1182.7 840.5 L1190.0 837.0 L1197.3 833.4 L1204.5 829.8 L1211.8 826.2 L1219.0 822.5 L1226.2 818.7 L1233.4 814.8 L1240.3 810.5 L1247.3 806.1 L1254.3 801.8 L1261.1 797.1 L1267.6 791.5 L1273.6 784.9 L1278.8 776.2 M848.2 984.0 L856.5 982.8 L864.4 980.9 L872.2 978.7 L880.0 976.3 L887.7 973.7 L895.3 971.1 L902.9 968.3 L910.5 965.5 L918.1 962.7 L925.6 959.8 L933.2 956.9 L940.7 954.0 L948.3 951.0 L955.8 948.1 L963.3 945.1 L970.8 942.0 L978.3 939.0 L985.8 936.0 L993.3 932.9 L1000.7 929.8 L1008.2 926.8 L1015.7 923.6 L1023.1 920.3 L1030.5 917.1 L1037.9 913.9 L1045.3 910.6 L1052.7 907.2 L1060.0 903.8 L1067.3 900.4 L1074.7 896.9 L1082.0 893.5 L1089.3 890.0 L1096.6 886.4 L1103.9 882.9 L1111.2 879.3 L1118.4 875.7 L1125.7 872.1 L1133.0 868.7 L1140.3 865.2 L1147.7 861.8 L1155.0 858.3 L1162.3 854.9 L1169.7 851.5 L1177.0 848.1 L1184.4 844.6 L1191.7 841.1 L1198.9 837.6 L1206.2 833.9 L1213.4 830.3 L1220.7 826.5 L1227.8 822.7 L1235.0 818.8 L1242.0 814.5 L1248.9 810.1 L1255.8 805.7 L1262.6 800.8 L1268.9 794.9 L1274.8 787.9 L1279.8 778.6 M849.6 987.4 L857.9 986.4 L865.9 984.6 L873.7 982.4 L881.5 980.1 L889.2 977.5 L896.8 974.9 L904.5 972.2 L912.1 969.4 L919.7 966.6 L927.2 963.7 L934.8 960.8 L942.3 957.9 L949.8 955.0 L957.4 952.0 L964.9 949.0 L972.4 946.0 L979.9 942.9 L987.4 939.9 L994.8 936.8 L1002.3 933.7 L1009.8 930.7 L1017.2 927.5 L1024.7 924.3 L1032.1 921.1 L1039.5 917.8 L1046.9 914.5 L1054.3 911.2 L1061.6 907.8 L1069.0 904.4 L1076.3 901.0 L1083.6 897.5 L1090.9 894.1 L1098.2 890.5 L1105.5 887.0 L1112.8 883.4 L1120.1 879.8 L1127.3 876.2 L1134.6 872.7 L1142.0 869.2 L1149.3 865.7 L1156.6 862.3 L1163.9 858.8 L1171.2 855.4 L1178.6 851.9 L1185.9 848.5 L1193.2 844.9 L1200.5 841.4 L1207.7 837.8 L1215.0 834.1 L1222.2 830.4 L1229.4 826.6 L1236.5 822.6 L1243.5 818.3 L1250.4 813.9 L1257.3 809.3 L1264.0 804.2 L1270.2 798.1 L1276.0 790.8 L1280.7 780.9 M850.8 990.4 L859.2 989.6 L867.2 987.9 L875.1 985.8 L882.9 983.5 L890.6 981.0 L898.3 978.4 L905.9 975.7 L913.5 973.0 L921.1 970.2 L928.7 967.3 L936.2 964.4 L943.8 961.5 L951.3 958.5 L958.8 955.6 L966.3 952.6 L973.8 949.6 L981.3 946.5 L988.8 943.5 L996.3 940.4 L1003.8 937.3 L1011.2 934.2 L1018.7 931.1 L1026.1 927.9 L1033.5 924.7 L1040.9 921.4 L1048.4 918.2 L1055.7 914.8 L1063.1 911.5 L1070.5 908.1 L1077.8 904.7 L1085.1 901.2 L1092.4 897.8 L1099.7 894.2 L1107.0 890.7 L1114.3 887.1 L1121.6 883.5 L1128.8 879.9 L1136.1 876.4 L1143.4 872.8 L1150.7 869.3 L1158.0 865.9 L1165.4 862.4 L1172.7 858.9 L1180.0 855.4 L1187.3 852.0 L1194.6 848.4 L1201.9 844.9 L1209.2 841.3 L1216.4 837.6 L1223.6 833.9 L1230.8 830.0 L1237.9 826.1 L1244.9 821.8 L1251.8 817.3 L1258.6 812.6 L1265.2 807.4 L1271.4 801.1 L1277.0 793.4 L1281.6 783.0 M851.9 993.2 L860.3 992.5 L868.4 990.8 L876.3 988.8 L884.1 986.5 L891.8 984.1 L899.5 981.5 L907.2 978.8 L914.8 976.1 L922.4 973.3 L929.9 970.4 L937.5 967.6 L945.0 964.6 L952.6 961.7 L960.1 958.7 L967.6 955.7 L975.1 952.7 L982.6 949.7 L990.1 946.6 L997.6 943.6 L1005.0 940.5 L1012.5 937.4 L1019.9 934.2 L1027.4 931.0 L1034.8 927.8 L1042.2 924.6 L1049.6 921.4 L1057.0 918.1 L1064.4 914.7 L1071.8 911.4 L1079.1 907.9 L1086.4 904.5 L1093.8 901.0 L1101.1 897.5 L1108.3 894.0 L1115.6 890.4 L1122.9 886.8 L1130.1 883.2 L1137.4 879.6 L1144.7 876.1 L1152.0 872.5 L1159.3 869.0 L1166.6 865.5 L1173.9 862.0 L1181.2 858.5 L1188.6 855.0 L1195.9 851.5 L1203.2 848.0 L1210.4 844.4 L1217.7 840.7 L1224.9 837.0 L1232.0 833.1 L1239.1 829.1 L1246.1 824.9 L1253.0 820.3 L1259.8 815.5 L1266.4 810.2 L1272.5 803.6 L1278.0 795.7 L1282.3 784.9 M852.8 995.5 L861.3 994.9 L869.4 993.3 L877.3 991.3 L885.1 989.1 L892.9 986.7 L900.6 984.1 L908.2 981.5 L915.8 978.7 L923.4 976.0 L931.0 973.1 L938.6 970.3 L946.1 967.3 L953.7 964.4 L961.2 961.4 L968.7 958.4 L976.2 955.4 L983.7 952.4 L991.2 949.3 L998.6 946.2 L1006.1 943.1 L1013.6 940.0 L1021.0 936.9 L1028.5 933.7 L1035.9 930.5 L1043.3 927.3 L1050.7 924.1 L1058.1 920.8 L1065.5 917.5 L1072.9 914.1 L1080.2 910.7 L1087.6 907.3 L1094.9 903.8 L1102.2 900.3 L1109.5 896.8 L1116.8 893.2 L1124.0 889.6 L1131.3 885.9 L1138.5 882.4 L1145.8 878.8 L1153.1 875.2 L1160.4 871.7 L1167.7 868.2 L1175.0 864.7 L1182.3 861.2 L1189.6 857.7 L1196.9 854.1 L1204.2 850.6 L1211.5 847.0 L1218.7 843.3 L1225.9 839.6 L1233.1 835.7 L1240.2 831.7 L1247.2 827.4 L1254.1 822.9 L1260.8 818.0 L1267.3 812.5 L1273.3 805.8 L1278.8 797.7 L1283.0 786.5 M853.6 997.3 L862.1 996.8 L870.2 995.3 L878.1 993.4 L886.0 991.2 L893.7 988.7 L901.4 986.2 L909.1 983.6 L916.7 980.9 L924.3 978.1 L931.9 975.3 L939.4 972.4 L947.0 969.5 L954.5 966.5 L962.0 963.6 L969.5 960.6 L977.1 957.6 L984.5 954.5 L992.0 951.4 L999.5 948.4 L1007.0 945.3 L1014.4 942.2 L1021.9 939.0 L1029.3 935.9 L1036.8 932.7 L1044.2 929.5 L1051.6 926.2 L1059.0 923.0 L1066.4 919.6 L1073.8 916.3 L1081.1 912.9 L1088.4 909.5 L1095.8 906.0 L1103.1 902.5 L1110.4 899.0 L1117.6 895.4 L1124.9 891.8 L1132.2 888.2 L1139.4 884.6 L1146.7 881.0 L1154.0 877.4 L1161.3 873.9 L1168.6 870.3 L1175.9 866.8 L1183.2 863.3 L1190.5 859.7 L1197.8 856.2 L1205.1 852.7 L1212.3 849.1 L1219.6 845.4 L1226.8 841.7 L1233.9 837.8 L1241.0 833.8 L1248.0 829.5 L1254.9 824.9 L1261.6 820.0 L1268.1 814.4 L1274.0 807.6 L1279.4 799.2 L1283.5 787.7 M854.1 998.6 L862.7 998.2 L870.8 996.8 L878.7 994.9 L886.6 992.7 L894.3 990.3 L902.0 987.7 L909.7 985.1 L917.3 982.4 L924.9 979.7 L932.5 976.8 L940.1 974.0 L947.6 971.0 L955.1 968.1 L962.7 965.1 L970.2 962.1 L977.7 959.1 L985.2 956.1 L992.7 953.0 L1000.1 949.9 L1007.6 946.8 L1015.1 943.7 L1022.5 940.6 L1030.0 937.4 L1037.4 934.3 L1044.8 931.0 L1052.3 927.8 L1059.7 924.6 L1067.0 921.2 L1074.4 917.9 L1081.8 914.5 L1089.1 911.1 L1096.4 907.7 L1103.7 904.1 L1111.0 900.6 L1118.3 897.0 L1125.6 893.4 L1132.8 889.8 L1140.1 886.2 L1147.4 882.6 L1154.6 879.0 L1161.9 875.4 L1169.2 871.9 L1176.5 868.3 L1183.8 864.8 L1191.1 861.3 L1198.4 857.8 L1205.7 854.2 L1212.9 850.6 L1220.2 847.0 L1227.4 843.2 L1234.5 839.3 L1241.6 835.3 L1248.6 831.0 L1255.5 826.4 L1262.2 821.4 L1268.6 815.8 L1274.6 808.9 L1279.9 800.4 L1283.8 788.7 M854.4 999.5 L863.0 999.1 L871.2 997.7 L879.1 995.8 L887.0 993.6 L894.7 991.2 L902.4 988.7 L910.1 986.1 L917.7 983.3 L925.3 980.6 L932.9 977.8 L940.5 974.9 L948.0 972.0 L955.5 969.1 L963.1 966.1 L970.6 963.1 L978.1 960.1 L985.6 957.0 L993.0 954.0 L1000.5 950.9 L1008.0 947.8 L1015.5 944.7 L1022.9 941.5 L1030.3 938.4 L1037.8 935.2 L1045.2 932.0 L1052.6 928.8 L1060.0 925.5 L1067.4 922.2 L1074.8 918.9 L1082.2 915.5 L1089.5 912.1 L1096.8 908.6 L1104.1 905.1 L1111.4 901.6 L1118.7 898.0 L1126.0 894.4 L1133.2 890.8 L1140.5 887.1 L1147.7 883.5 L1155.0 879.9 L1162.3 876.4 L1169.6 872.8 L1176.9 869.3 L1184.1 865.7 L1191.4 862.2 L1198.8 858.7 L1206.1 855.2 L1213.3 851.6 L1220.6 847.9 L1227.8 844.1 L1234.9 840.2 L1242.0 836.2 L1249.0 831.9 L1255.9 827.3 L1262.6 822.3 L1269.0 816.6 L1274.9 809.6 L1280.1 801.1 L1284.1 789.2 M909.9 883.8 L917.6 881.9 L925.0 879.3 L932.1 876.1 L939.0 872.5 L946.1 869.1 L953.2 865.9 L960.4 862.9 L967.7 860.1 L975.0 857.3 L982.2 854.4 L989.5 851.5 L996.7 848.6 L1003.9 845.6 L1011.1 842.7 L1018.4 839.7 L1025.6 836.8 L1032.8 833.8 L1040.0 830.9 L1047.3 827.9 L1054.5 825.0 L1061.7 822.1 L1069.0 819.1 L1076.2 816.2 L1083.4 813.3 L1090.6 810.3 L1097.9 807.3 L1105.1 804.3 L1112.3 801.3 L1119.4 798.3 L1126.6 795.3 L1133.8 792.2 L1141.1 789.3 L1148.3 786.3 L1155.5 783.4 L1162.7 780.4 L1170.0 777.5 L1177.2 774.7 L1184.5 771.9 L1191.8 769.1 L1199.2 766.5 L1206.6 763.9 L1214.0 761.5 L1221.5 759.4 L1229.2 757.5 L1237.2 756.4 L1245.6 756.3 L1254.6 757.8 L1264.6 761.9 L1283.7 788.3 M910.7 885.8 L918.4 884.1 L925.9 881.6 L933.0 878.4 L940.0 874.8 L947.0 871.5 L954.2 868.3 L961.4 865.4 L968.7 862.6 L975.9 859.7 L983.2 856.8 L990.4 853.9 L997.6 850.9 L1004.9 848.0 L1012.1 845.0 L1019.3 842.0 L1026.5 839.0 L1033.7 836.0 L1040.9 833.0 L1048.1 830.0 L1055.3 827.0 L1062.5 824.0 L1069.7 821.1 L1076.9 818.1 L1084.2 815.1 L1091.4 812.1 L1098.6 809.1 L1105.8 806.1 L1113.0 803.1 L1120.2 800.0 L1127.3 797.0 L1134.5 794.0 L1141.8 791.0 L1149.0 788.1 L1156.2 785.1 L1163.4 782.2 L1170.6 779.2 L1177.9 776.3 L1185.1 773.4 L1192.4 770.6 L1199.7 767.9 L1207.1 765.3 L1214.5 762.7 L1222.0 760.4 L1229.6 758.4 L1237.5 757.1 L1245.7 756.8 L1254.6 757.9 L1264.4 761.3 L1282.4 785.1 M911.9 888.8 L919.8 887.4 L927.3 885.1 L934.4 881.9 L941.4 878.4 L948.5 875.2 L955.7 872.1 L962.9 869.1 L970.2 866.3 L977.4 863.4 L984.7 860.5 L991.9 857.6 L999.1 854.6 L1006.3 851.5 L1013.5 848.5 L1020.7 845.4 L1027.8 842.4 L1035.0 839.3 L1042.2 836.2 L1049.4 833.2 L1056.6 830.1 L1063.7 827.1 L1070.9 824.0 L1078.1 821.0 L1085.3 817.9 L1092.5 814.8 L1099.6 811.7 L1106.8 808.8 L1114.0 805.8 L1121.2 802.7 L1128.4 799.7 L1135.6 796.7 L1142.8 793.7 L1150.1 790.8 L1157.3 787.8 L1164.5 784.8 L1171.7 781.7 L1178.9 778.7 L1186.1 775.8 L1193.3 772.9 L1200.6 770.0 L1207.9 767.3 L1215.2 764.6 L1222.6 761.9 L1230.1 759.7 L1237.9 758.2 L1246.0 757.5 L1254.6 758.0 L1264.0 760.4 L1280.4 780.2 M913.5 892.6 L921.5 891.6 L929.0 889.4 L936.2 886.3 L943.2 882.9 L950.3 879.7 L957.5 876.6 L964.8 873.7 L972.0 870.9 L979.3 868.0 L986.5 865.1 L993.7 862.1 L1000.9 859.0 L1008.1 855.9 L1015.2 852.8 L1022.4 849.7 L1029.5 846.5 L1036.7 843.4 L1043.8 840.2 L1050.9 837.1 L1058.1 833.9 L1065.2 830.8 L1072.4 827.6 L1079.5 824.5 L1086.7 821.3 L1093.8 818.2 L1100.9 815.0 L1108.2 812.0 L1115.4 809.0 L1122.6 806.0 L1129.8 803.0 L1137.0 800.0 L1144.2 797.0 L1151.4 794.1 L1158.6 791.1 L1165.8 788.0 L1172.9 784.8 L1180.1 781.7 L1187.3 778.7 L1194.4 775.6 L1201.7 772.7 L1208.9 769.7 L1216.1 766.8 L1223.4 763.9 L1230.8 761.4 L1238.4 759.5 L1246.4 758.3 L1254.7 758.1 L1263.6 759.4 L1278.0 774.2 M915.1 896.5 L923.3 896.0 L930.8 893.9 L938.0 890.9 L945.1 887.6 L952.3 884.5 L959.5 881.5 L966.7 878.6 L974.0 875.7 L981.2 872.9 L988.5 869.9 L995.6 866.8 L1002.8 863.7 L1010.0 860.6 L1017.1 857.5 L1024.2 854.2 L1031.3 850.9 L1038.4 847.7 L1045.5 844.4 L1052.6 841.2 L1059.7 838.0 L1066.8 834.7 L1073.9 831.5 L1081.0 828.2 L1088.1 825.0 L1095.2 821.7 L1102.4 818.5 L1109.6 815.5 L1116.8 812.5 L1124.0 809.5 L1131.2 806.5 L1138.4 803.5 L1145.6 800.6 L1152.8 797.6 L1160.0 794.6 L1167.2 791.4 L1174.3 788.2 L1181.4 785.0 L1188.5 781.7 L1195.6 778.6 L1202.8 775.5 L1210.0 772.4 L1217.1 769.2 L1224.2 765.9 L1231.5 763.1 L1239.0 760.9 L1246.7 759.2 L1254.7 758.2 L1263.2 758.2 L1275.4 767.8 M916.6 900.3 L924.9 900.2 L932.5 898.2 L939.8 895.2 L946.9 892.1 L954.1 889.1 L961.3 886.1 L968.6 883.2 L975.8 880.3 L983.1 877.4 L990.3 874.5 L997.5 871.3 L1004.6 868.2 L1011.7 865.0 L1018.8 861.8 L1025.9 858.4 L1033.0 855.1 L1040.0 851.8 L1047.1 848.4 L1054.2 845.1 L1061.3 841.8 L1068.3 838.4 L1075.4 835.1 L1082.5 831.8 L1089.5 828.4 L1096.6 825.1 L1103.7 821.8 L1110.9 818.8 L1118.1 815.8 L1125.3 812.8 L1132.5 809.8 L1139.7 806.8 L1146.9 803.9 L1154.2 800.9 L1161.4 797.9 L1168.5 794.6 L1175.5 791.3 L1182.6 788.0 L1189.7 784.6 L1196.8 781.4 L1203.9 778.1 L1211.0 774.8 L1218.0 771.4 L1225.0 767.8 L1232.1 764.7 L1239.5 762.3 L1247.1 760.1 L1254.8 758.3 L1262.7 757.2 L1273.0 761.8 M917.8 903.3 L926.3 903.5 L934.0 901.6 L941.2 898.7 L948.4 895.7 L955.6 892.8 L962.8 889.8 L970.1 886.9 L977.3 884.0 L984.6 881.1 L991.8 878.2 L998.9 875.0 L1006.0 871.8 L1013.2 868.5 L1020.3 865.3 L1027.3 861.9 L1034.3 858.5 L1041.4 855.1 L1048.4 851.7 L1055.5 848.3 L1062.5 844.8 L1069.5 841.4 L1076.6 838.0 L1083.6 834.6 L1090.7 831.2 L1097.7 827.8 L1104.7 824.4 L1112.0 821.5 L1119.2 818.5 L1126.4 815.5 L1133.6 812.5 L1140.8 809.5 L1148.0 806.6 L1155.2 803.6 L1162.5 800.6 L1169.5 797.3 L1176.6 793.8 L1183.6 790.4 L1190.6 787.0 L1197.7 783.6 L1204.7 780.2 L1211.8 776.8 L1218.7 773.3 L1225.6 769.4 L1232.6 766.0 L1240.0 763.3 L1247.3 760.7 L1254.8 758.4 L1262.4 756.3 L1271.0 756.9 M918.6 905.3 L927.2 905.7 L934.9 903.9 L942.1 901.0 L949.3 898.1 L956.6 895.2 L963.8 892.3 L971.1 889.4 L978.3 886.5 L985.6 883.6 L992.8 880.6 L999.9 877.4 L1007.0 874.1 L1014.1 870.9 L1021.2 867.6 L1028.2 864.2 L1035.2 860.7 L1042.3 857.3 L1049.3 853.8 L1056.3 850.3 L1063.3 846.9 L1070.3 843.4 L1077.4 840.0 L1084.4 836.5 L1091.4 833.0 L1098.4 829.6 L1105.5 826.2 L1112.7 823.2 L1119.9 820.2 L1127.1 817.2 L1134.3 814.3 L1141.5 811.3 L1148.7 808.3 L1155.9 805.3 L1163.2 802.4 L1170.2 799.0 L1177.2 795.5 L1184.2 792.0 L1191.2 788.6 L1198.3 785.1 L1205.3 781.6 L1212.3 778.2 L1219.2 774.5 L1226.0 770.4 L1233.0 766.9 L1240.3 764.0 L1247.5 761.2 L1254.8 758.4 L1262.1 755.7 L1269.7 753.7 M839.3 943.2 L844.2 947.9 L848.8 952.6 L853.1 957.5 L856.9 962.6 L860.1 968.0 L862.6 973.6 L864.5 979.4 L866.0 985.5 L867.0 991.7 L867.9 998.0 M839.3 943.2 L862.4 940.9 M844.2 947.9 L867.1 945.9 M848.8 952.6 L871.6 951.1 M853.1 957.5 L875.5 956.5 M856.9 962.6 L878.7 962.1 M860.1 968.0 L881.4 968.0 M862.6 973.6 L883.4 974.1 M864.5 979.4 L885.0 980.5 M866.0 985.5 L886.1 987.0 M867.0 991.7 L887.1 993.5 M857.4 935.9 L862.4 940.9 L867.1 945.9 L871.6 951.1 L875.5 956.5 L878.7 962.1 L881.4 968.0 L883.4 974.1 L885.0 980.5 L886.1 987.0 L887.1 993.5 M857.4 935.9 L880.5 933.7 M862.4 940.9 L885.4 938.9 M867.1 945.9 L889.8 944.2 M871.6 951.1 L893.8 949.8 M875.5 956.5 L897.1 955.5 M878.7 962.1 L899.8 961.6 M881.4 968.0 L901.9 967.8 M883.4 974.1 L903.5 974.3 M885.0 980.5 L904.8 981.0 M886.1 987.0 L905.8 987.7 M875.5 928.6 L880.5 933.7 L885.4 938.9 L889.8 944.2 L893.8 949.8 L897.1 955.5 L899.8 961.6 L901.9 967.8 L903.5 974.3 L904.8 981.0 L905.8 987.7 M875.5 928.6 L898.6 926.5 M880.5 933.7 L903.5 931.8 M885.4 938.9 L908.0 937.2 M889.8 944.2 L912.0 942.8 M893.8 949.8 L915.4 948.7 M897.1 955.5 L918.1 954.8 M899.8 961.6 L920.3 961.1 M901.9 967.8 L921.9 967.7 M903.5 974.3 L923.2 974.4 M904.8 981.0 L924.2 981.2 M893.6 921.3 L898.6 926.5 L903.5 931.8 L908.0 937.2 L912.0 942.8 L915.4 948.7 L918.1 954.8 L920.3 961.1 L921.9 967.7 L923.2 974.4 L924.2 981.2 M893.6 921.3 L916.7 919.3 M898.6 926.5 L921.6 924.6 M903.5 931.8 L926.2 930.0 M908.0 937.2 L930.2 935.7 M912.0 942.8 L933.6 941.6 M915.4 948.7 L936.3 947.8 M918.1 954.8 L938.5 954.2 M920.3 961.1 L940.1 960.8 M921.9 967.7 L941.4 967.6 M923.2 974.4 L942.5 974.4 M911.7 914.0 L916.7 919.3 L921.6 924.6 L926.2 930.0 L930.2 935.7 L933.6 941.6 L936.3 947.8 L938.5 954.2 L940.1 960.8 L941.4 967.6 L942.5 974.4 M911.7 914.0 L934.9 912.1 M916.7 919.3 L939.8 917.4 M921.6 924.6 L944.3 922.9 M926.2 930.0 L948.3 928.6 M930.2 935.7 L951.7 934.5 M933.6 941.6 L954.5 940.7 M936.3 947.8 L956.7 947.1 M938.5 954.2 L958.3 953.7 M940.1 960.8 L959.6 960.5 M941.4 967.6 L960.7 967.4 M929.8 906.9 L934.9 912.1 L939.8 917.4 L944.3 922.9 L948.3 928.6 L951.7 934.5 L954.5 940.7 L956.7 947.1 L958.3 953.7 L959.6 960.5 L960.7 967.4 M929.8 906.9 L953.0 904.9 M934.9 912.1 L957.9 910.2 M939.8 917.4 L962.4 915.7 M944.3 922.9 L966.4 921.3 M948.3 928.6 L969.8 927.3 M951.7 934.5 L972.6 933.4 M954.5 940.7 L974.8 939.9 M956.7 947.1 L976.4 946.5 M958.3 953.7 L977.7 953.3 M959.6 960.5 L978.8 960.1 M947.9 899.6 L953.0 904.9 L957.9 910.2 L962.4 915.7 L966.4 921.3 L969.8 927.3 L972.6 933.4 L974.8 939.9 L976.4 946.5 L977.7 953.3 L978.8 960.1 M947.9 899.6 L971.1 897.6 M953.0 904.9 L976.0 902.9 M957.9 910.2 L980.5 908.4 M962.4 915.7 L984.5 914.1 M966.4 921.3 L987.9 920.0 M969.8 927.3 L990.7 926.1 M972.6 933.4 L992.9 932.5 M974.8 939.9 L994.5 939.2 M976.4 946.5 L995.8 945.9 M977.7 953.3 L996.9 952.8 M966.0 892.4 L971.1 897.6 L976.0 902.9 L980.5 908.4 L984.5 914.1 L987.9 920.0 L990.7 926.1 L992.9 932.5 L994.5 939.2 L995.8 945.9 L996.9 952.8 M966.0 892.4 L989.2 890.3 M971.1 897.6 L994.1 895.6 M976.0 902.9 L998.6 901.1 M980.5 908.4 L1002.6 906.7 M984.5 914.1 L1006.0 912.6 M987.9 920.0 L1008.8 918.8 M990.7 926.1 L1010.9 925.1 M992.9 932.5 L1012.5 931.7 M994.5 939.2 L1013.8 938.5 M995.8 945.9 L1014.9 945.3 M984.1 885.1 L989.2 890.3 L994.1 895.6 L998.6 901.1 L1002.6 906.7 L1006.0 912.6 L1008.8 918.8 L1010.9 925.1 L1012.5 931.7 L1013.8 938.5 L1014.9 945.3 M984.1 885.1 L1007.1 882.5 M989.2 890.3 L1012.0 887.8 M994.1 895.6 L1016.5 893.3 M998.6 901.1 L1020.5 899.0 M1002.6 906.7 L1023.9 904.9 M1006.0 912.6 L1026.7 911.0 M1008.8 918.8 L1028.8 917.5 M1010.9 925.1 L1030.5 924.1 M1012.5 931.7 L1031.8 930.9 M1013.8 938.5 L1032.9 937.7 M1002.0 877.3 L1007.1 882.5 L1012.0 887.8 L1016.5 893.3 L1020.5 899.0 L1023.9 904.9 L1026.7 911.0 L1028.8 917.5 L1030.5 924.1 L1031.8 930.9 L1032.9 937.7 M1002.0 877.3 L1024.8 874.4 M1007.1 882.5 L1029.7 879.7 M1012.0 887.8 L1034.3 885.2 M1016.5 893.3 L1038.3 891.0 M1020.5 899.0 L1041.7 896.9 M1023.9 904.9 L1044.5 903.2 M1026.7 911.0 L1046.7 909.6 M1028.8 917.5 L1048.4 916.3 M1030.5 924.1 L1049.7 923.1 M1031.8 930.9 L1050.8 930.0 M1019.7 869.1 L1024.8 874.4 L1029.7 879.7 L1034.3 885.2 L1038.3 891.0 L1041.7 896.9 L1044.5 903.2 L1046.7 909.6 L1048.4 916.3 L1049.7 923.1 L1050.8 930.0 M1019.7 869.1 L1042.4 865.8 M1024.8 874.4 L1047.3 871.2 M1029.7 879.7 L1051.9 876.8 M1034.3 885.2 L1056.0 882.6 M1038.3 891.0 L1059.4 888.7 M1041.7 896.9 L1062.3 895.0 M1044.5 903.2 L1064.5 901.5 M1046.7 909.6 L1066.2 908.3 M1048.4 916.3 L1067.5 915.2 M1049.7 923.1 L1068.6 922.2 M1037.2 860.4 L1042.4 865.8 L1047.3 871.2 L1051.9 876.8 L1056.0 882.6 L1059.4 888.7 L1062.3 895.0 L1064.5 901.5 L1066.2 908.3 L1067.5 915.2 L1068.6 922.2 M1037.2 860.4 L1059.9 857.1 M1042.4 865.8 L1064.9 862.6 M1047.3 871.2 L1069.5 868.3 M1051.9 876.8 L1073.6 874.2 M1056.0 882.6 L1077.1 880.3 M1059.4 888.7 L1079.9 886.6 M1062.3 895.0 L1082.2 893.2 M1064.5 901.5 L1083.9 900.1 M1066.2 908.3 L1085.3 907.0 M1067.5 915.2 L1086.4 914.1 M1054.8 851.7 L1059.9 857.1 L1064.9 862.6 L1069.5 868.3 L1073.6 874.2 L1077.1 880.3 L1079.9 886.6 L1082.2 893.2 L1083.9 900.1 L1085.3 907.0 L1086.4 914.1 M1054.8 851.7 L1077.5 848.5 M1059.9 857.1 L1082.5 854.0 M1064.9 862.6 L1087.1 859.7 M1069.5 868.3 L1091.2 865.6 M1073.6 874.2 L1094.7 871.8 M1077.1 880.3 L1097.5 878.2 M1079.9 886.6 L1099.8 884.8 M1082.2 893.2 L1101.5 891.7 M1083.9 900.1 L1102.9 898.7 M1085.3 907.0 L1104.1 905.8 M1072.3 843.0 L1077.5 848.5 L1082.5 854.0 L1087.1 859.7 L1091.2 865.6 L1094.7 871.8 L1097.5 878.2 L1099.8 884.8 L1101.5 891.7 L1102.9 898.7 L1104.1 905.8 M1072.3 843.0 L1095.0 839.8 M1077.5 848.5 L1100.0 845.4 M1082.5 854.0 L1104.6 851.1 M1087.1 859.7 L1108.7 857.0 M1091.2 865.6 L1112.2 863.1 M1094.7 871.8 L1115.1 869.6 M1097.5 878.2 L1117.4 876.2 M1099.8 884.8 L1119.1 883.1 M1101.5 891.7 L1120.5 890.1 M1102.9 898.7 L1121.7 897.2 M1089.8 834.3 L1095.0 839.8 L1100.0 845.4 L1104.6 851.1 L1108.7 857.0 L1112.2 863.1 L1115.1 869.6 L1117.4 876.2 L1119.1 883.1 L1120.5 890.1 L1121.7 897.2 M1089.8 834.3 L1112.7 831.4 M1095.0 839.8 L1117.7 837.0 M1100.0 845.4 L1122.3 842.6 M1104.6 851.1 L1126.3 848.5 M1108.7 857.0 L1129.8 854.6 M1112.2 863.1 L1132.7 861.0 M1115.1 869.6 L1134.9 867.6 M1117.4 876.2 L1136.7 874.4 M1119.1 883.1 L1138.0 881.4 M1120.5 890.1 L1139.2 888.4 M1107.5 826.0 L1112.7 831.4 L1117.7 837.0 L1122.3 842.6 L1126.3 848.5 L1129.8 854.6 L1132.7 861.0 L1134.9 867.6 L1136.7 874.4 L1138.0 881.4 L1139.2 888.4 M1107.5 826.0 L1130.7 823.9 M1112.7 831.4 L1135.6 829.3 M1117.7 837.0 L1140.1 834.8 M1122.3 842.6 L1144.2 840.5 M1126.3 848.5 L1147.6 846.5 M1129.8 854.6 L1150.4 852.8 M1132.7 861.0 L1152.6 859.3 M1134.9 867.6 L1154.3 866.0 M1136.7 874.4 L1155.6 872.8 M1138.0 881.4 L1156.7 879.8 M1125.5 818.6 L1130.7 823.9 L1135.6 829.3 L1140.1 834.8 L1144.2 840.5 L1147.6 846.5 L1150.4 852.8 L1152.6 859.3 L1154.3 866.0 L1155.6 872.8 L1156.7 879.8 M1125.5 818.6 L1148.6 816.3 M1130.7 823.9 L1153.5 821.6 M1135.6 829.3 L1158.0 827.0 M1140.1 834.8 L1162.0 832.6 M1144.2 840.5 L1165.4 838.5 M1147.6 846.5 L1168.2 844.6 M1150.4 852.8 L1170.3 851.0 M1152.6 859.3 L1171.9 857.6 M1154.3 866.0 L1173.2 864.3 M1155.6 872.8 L1174.3 871.1 M1143.6 811.1 L1148.6 816.3 L1153.5 821.6 L1158.0 827.0 L1162.0 832.6 L1165.4 838.5 L1168.2 844.6 L1170.3 851.0 L1171.9 857.6 L1173.2 864.3 L1174.3 871.1 M1143.6 811.1 L1166.6 808.8 M1148.6 816.3 L1171.5 813.9 M1153.5 821.6 L1175.9 819.2 M1158.0 827.0 L1179.9 824.8 M1162.0 832.6 L1183.2 830.5 M1165.4 838.5 L1185.9 836.5 M1168.2 844.6 L1188.0 842.8 M1170.3 851.0 L1189.6 849.3 M1171.9 857.6 L1190.8 855.9 M1173.2 864.3 L1191.8 862.6 M1161.6 803.7 L1166.6 808.8 L1171.5 813.9 L1175.9 819.2 L1179.9 824.8 L1183.2 830.5 L1185.9 836.5 L1188.0 842.8 L1189.6 849.3 L1190.8 855.9 L1191.8 862.6 M1161.6 803.7 L1184.2 800.1 M1166.6 808.8 L1189.0 805.3 M1171.5 813.9 L1193.5 810.6 M1175.9 819.2 L1197.4 816.2 M1179.9 824.8 L1200.8 821.9 M1183.2 830.5 L1203.5 828.0 M1185.9 836.5 L1205.6 834.3 M1188.0 842.8 L1207.2 840.8 M1189.6 849.3 L1208.4 847.4 M1190.8 855.9 L1209.5 854.1 M1179.1 795.0 L1184.2 800.1 L1189.0 805.3 L1193.5 810.6 L1197.4 816.2 L1200.8 821.9 L1203.5 828.0 L1205.6 834.3 L1207.2 840.8 L1208.4 847.4 L1209.5 854.1 M1179.1 795.0 L1201.7 791.3 M1184.2 800.1 L1206.5 796.5 M1189.0 805.3 L1211.0 801.8 M1193.5 810.6 L1214.9 807.4 M1197.4 816.2 L1218.3 813.1 M1200.8 821.9 L1221.0 819.2 M1203.5 828.0 L1223.1 825.5 M1205.6 834.3 L1224.7 831.9 M1207.2 840.8 L1225.9 838.6 M1208.4 847.4 L1226.9 845.3 M1196.6 786.2 L1201.7 791.3 L1206.5 796.5 L1211.0 801.8 L1214.9 807.4 L1218.3 813.1 L1221.0 819.2 L1223.1 825.5 L1224.7 831.9 L1225.9 838.6 L1226.9 845.3 M1196.6 786.2 L1219.1 782.5 M1201.7 791.3 L1224.0 787.6 M1206.5 796.5 L1228.4 792.9 M1211.0 801.8 L1232.3 798.4 M1214.9 807.4 L1235.6 804.1 M1218.3 813.1 L1238.3 810.0 M1221.0 819.2 L1240.4 816.2 M1223.1 825.5 L1242.0 822.7 M1224.7 831.9 L1243.2 829.2 M1225.9 838.6 L1244.2 835.9 M1214.1 777.5 L1219.1 782.5 L1224.0 787.6 L1228.4 792.9 L1232.3 798.4 L1235.6 804.1 L1238.3 810.0 L1240.4 816.2 L1242.0 822.7 L1243.2 829.2 L1244.2 835.9 M1214.1 777.5 L1236.3 772.8 M1219.1 782.5 L1241.0 777.8 M1224.0 787.6 L1245.4 783.0 M1228.4 792.9 L1249.3 788.3 M1232.3 798.4 L1252.6 793.9 M1235.6 804.1 L1255.2 799.7 M1238.3 810.0 L1257.2 805.8 M1240.4 816.2 L1258.8 812.1 M1242.0 822.7 L1259.9 818.6 M1243.2 829.2 L1260.8 825.1 M1231.3 767.9 L1236.3 772.8 L1241.0 777.8 L1245.4 783.0 L1249.3 788.3 L1252.6 793.9 L1255.2 799.7 L1257.2 805.8 L1258.8 812.1 L1259.9 818.6 L1260.8 825.1 M1231.3 767.9 L1254.1 764.9 M1236.3 772.8 L1258.6 769.2 M1241.0 777.8 L1262.7 773.6 M1245.4 783.0 L1266.3 778.3 M1249.3 788.3 L1269.3 783.2 M1252.6 793.9 L1271.6 788.3 M1255.2 799.7 L1273.4 793.7 M1257.2 805.8 L1274.6 799.3 M1258.8 812.1 L1275.5 805.1 M1259.9 818.6 L1276.2 810.9 M1249.4 760.6 L1254.1 764.9 L1258.6 769.2 L1262.7 773.6 L1266.3 778.3 L1269.3 783.2 L1271.6 788.3 L1273.4 793.7 L1274.6 799.3 L1275.5 805.1 L1276.2 810.9 M1249.4 760.6 L1270.6 756.4 M1254.1 764.9 L1274.4 759.1 M1258.6 769.2 L1277.9 762.0 M1262.7 773.6 L1280.9 765.1 M1266.3 778.3 L1283.2 768.4 M1269.3 783.2 L1284.9 772.0 M1271.6 788.3 L1286.1 775.8 M1273.4 793.7 L1286.7 779.8 M1274.6 799.3 L1286.9 784.0 M1275.5 805.1 L1286.9 788.3 M919.4 880.4 L923.5 884.9 L926.5 889.7 L927.9 895.3 L927.6 901.5 L926.2 908.1 M919.4 880.4 L938.3 903.4 M926.2 908.1 L931.4 875.5 M931.4 875.5 L935.5 880.0 L938.6 884.9 L940.0 890.5 L939.7 896.8 L938.3 903.4 M931.4 875.5 L950.4 898.6 M938.3 903.4 L943.0 869.5 M943.0 869.5 L947.2 874.2 L950.4 879.4 L951.9 885.2 L951.7 891.7 L950.4 898.6 M943.0 869.5 L962.5 893.8 M950.4 898.6 L954.9 864.2 M954.9 864.2 L959.1 869.0 L962.3 874.3 L963.9 880.2 L963.7 886.8 L962.5 893.8 M954.9 864.2 L974.6 889.0 M962.5 893.8 L967.0 859.4 M967.0 859.4 L971.2 864.3 L974.4 869.5 L975.9 875.4 L975.8 882.0 L974.6 889.0 M967.0 859.4 L986.6 884.1 M974.6 889.0 L979.1 854.7 M979.1 854.7 L983.3 859.5 L986.5 864.7 L988.0 870.6 L987.9 877.1 L986.6 884.1 M979.1 854.7 L998.5 878.8 M986.6 884.1 L991.1 849.9 M991.1 849.9 L995.3 854.5 L998.5 859.7 L1000.0 865.4 L999.8 871.9 L998.5 878.8 M991.1 849.9 L1010.3 873.4 M998.5 878.8 L1003.2 845.0 M1003.2 845.0 L1007.4 849.6 L1010.5 854.6 L1011.9 860.2 L1011.6 866.6 L1010.3 873.4 M1003.2 845.0 L1022.1 867.8 M1010.3 873.4 L1015.2 840.1 M1015.2 840.1 L1019.3 844.5 L1022.4 849.4 L1023.8 854.9 L1023.5 861.2 L1022.1 867.8 M1015.2 840.1 L1033.8 862.0 M1022.1 867.8 L1027.3 835.2 M1027.3 835.2 L1031.3 839.4 L1034.3 844.1 L1035.6 849.5 L1035.2 855.5 L1033.8 862.0 M1027.3 835.2 L1045.5 856.2 M1033.8 862.0 L1039.3 830.3 M1039.3 830.3 L1043.3 834.4 L1046.2 838.9 L1047.4 844.1 L1047.0 849.9 L1045.5 856.2 M1039.3 830.3 L1057.2 850.4 M1045.5 856.2 L1051.4 825.4 M1051.4 825.4 L1055.3 829.3 L1058.1 833.6 L1059.3 838.6 L1058.7 844.3 L1057.2 850.4 M1051.4 825.4 L1068.9 844.6 M1057.2 850.4 L1063.5 820.6 M1063.5 820.6 L1067.3 824.3 L1070.0 828.4 L1071.1 833.2 L1070.5 838.7 L1068.9 844.6 M1063.5 820.6 L1080.5 838.8 M1068.9 844.6 L1075.5 815.7 M1075.5 815.7 L1079.3 819.3 L1081.9 823.2 L1082.9 827.8 L1082.3 833.1 L1080.5 838.8 M1075.5 815.7 L1092.2 833.0 M1080.5 838.8 L1087.6 810.8 M1087.6 810.8 L1091.2 814.2 L1093.9 817.9 L1094.8 822.4 L1094.0 827.5 L1092.2 833.0 M1087.6 810.8 L1104.0 827.4 M1092.2 833.0 L1099.6 805.9 M1099.6 805.9 L1103.2 809.1 L1105.8 812.7 L1106.7 817.0 L1105.8 822.0 L1104.0 827.4 M1099.6 805.9 L1116.0 822.5 M1104.0 827.4 L1111.6 800.9 M1111.6 800.9 L1115.2 804.1 L1117.8 807.8 L1118.7 812.1 L1117.9 817.1 L1116.0 822.5 M1111.6 800.9 L1128.0 817.5 M1116.0 822.5 L1123.6 795.8 M1123.6 795.8 L1127.2 799.1 L1129.8 802.7 L1130.7 807.1 L1129.9 812.1 L1128.0 817.5 M1123.6 795.8 L1140.1 812.6 M1128.0 817.5 L1135.6 790.8 M1135.6 790.8 L1139.2 794.1 L1141.8 797.7 L1142.7 802.1 L1141.9 807.1 L1140.1 812.6 M1135.6 790.8 L1152.1 807.6 M1140.1 812.6 L1147.6 785.9 M1147.6 785.9 L1151.2 789.1 L1153.8 792.8 L1154.7 797.1 L1153.9 802.2 L1152.1 807.6 M1147.6 785.9 L1164.0 802.4 M1152.1 807.6 L1159.7 781.0 M1159.7 781.0 L1163.3 784.2 L1165.8 787.8 L1166.7 792.1 L1165.9 797.0 L1164.0 802.4 M1159.7 781.0 L1175.7 796.6 M1164.0 802.4 L1171.7 776.1 M1171.7 776.1 L1175.3 779.1 L1177.7 782.6 L1178.5 786.6 L1177.6 791.4 L1175.7 796.6 M1171.7 776.1 L1187.4 790.8 M1175.7 796.6 L1183.9 771.5 M1183.9 771.5 L1187.3 774.2 L1189.7 777.4 L1190.4 781.3 L1189.4 785.8 L1187.4 790.8 M1183.9 771.5 L1199.0 785.0 M1187.4 790.8 L1196.1 767.0 M1196.1 767.0 L1199.4 769.5 L1201.7 772.4 L1202.3 776.0 L1201.2 780.3 L1199.0 785.0 M1196.1 767.0 L1210.7 779.1 M1199.0 785.0 L1208.4 762.8 M1208.4 762.8 L1211.6 765.0 L1213.8 767.6 L1214.2 770.8 L1213.0 774.8 L1210.7 779.1 M1208.4 762.8 L1222.0 772.5 M1210.7 779.1 L1221.0 759.1 M1221.0 759.1 L1223.9 760.7 L1225.8 762.7 L1226.0 765.4 L1224.6 768.7 L1222.0 772.5 M1221.0 759.1 L1233.8 766.9 M1222.0 772.5 L1233.9 756.5 M1233.9 756.5 L1236.6 757.5 L1238.3 758.9 L1238.3 761.0 L1236.6 763.7 L1233.8 766.9 M1233.9 756.5 L1245.9 762.1 M1233.8 766.9 L1247.9 756.5 M1247.9 756.5 L1250.2 756.5 L1251.5 756.9 L1251.1 758.0 L1249.0 759.8 L1245.9 762.1 M1247.9 756.5 L1257.9 757.2 M1245.9 762.1 L1264.1 761.7 M1264.1 761.7 L1265.6 759.7 L1266.0 758.1 L1264.8 757.2 L1261.9 757.0 L1257.9 757.2 M1264.1 761.7 L1265.6 754.1 M1257.9 757.2 L1284.1 789.4" stroke="#000" stroke-width="0.9" fill="none"/>
<path d="M900.0 905.0 L930.2 906.7 L992.0 882.0 L1021.4 868.5 L1104.7 827.2 L1164.6 802.5 L1216.7 776.5 L1229.7 768.6" stroke="#000" stroke-width="2.2" fill="none"/>
</g>
<path d="M792.0 901.0 L795.0 900.4 L801.0 899.3 L810.0 897.6 L822.0 895.4 L833.5 893.4 L844.5 891.8 L855.0 890.5 L865.0 889.5 L875.0 888.4 L885.0 887.1 L894.9 885.7 L904.9 884.2 L914.0 882.1 L922.2 879.6 L929.5 876.5 L936.0 873.0 L943.0 869.5 L950.5 866.1 L958.5 862.7 L967.0 859.5 L977.1 855.5 L988.9 850.8 L1002.3 845.4 L1017.4 839.2 L1032.2 833.2 L1046.9 827.3 L1061.3 821.4 L1075.6 815.8 L1088.8 810.4 L1101.1 805.3 L1112.5 800.6 L1122.9 796.1 L1134.0 791.5 L1145.7 786.7 L1158.0 781.7 L1171.1 776.4 L1183.1 771.8 L1194.2 767.7 L1204.3 764.2 L1213.4 761.3 L1221.6 759.0 L1228.7 757.4 L1234.9 756.4 L1240.1 756.1 L1245.1 756.2 L1250.0 756.9 L1254.7 758.0 L1259.3 759.7 L1263.5 761.6 L1267.4 763.9 L1271.0 766.5 L1274.3 769.5 L1277.0 772.7 L1279.3 776.1 L1281.0 779.7 L1282.1 783.7 L1283.0 786.6 L1283.6 788.5 L1283.9 789.5 L1283.6 790.5 L1283.0 792.4 L1282.1 795.3 L1281.0 799.3 L1279.1 803.3 L1276.6 807.5 L1273.3 811.9 L1269.4 816.5 L1264.3 821.2 L1258.1 826.1 L1250.8 831.1 L1242.4 836.4 L1232.0 842.2 L1219.6 848.7 L1205.3 855.9 L1189.0 863.7 L1171.9 872.0 L1154.0 880.8 L1135.3 890.1 L1115.8 899.8 L1096.3 909.3 L1076.7 918.4 L1057.2 927.2 L1037.6 935.6 L1018.1 943.9 L998.5 952.1 L979.0 960.0 L959.5 967.9 L941.6 974.8 L925.3 980.9 L910.7 986.2 L897.6 990.6 L886.2 994.1 L876.4 996.8 L868.1 998.6 L861.5 999.6 L855.2 999.8 L849.4 999.3 L844.0 998.0 L839.0 996.0 L834.6 993.5 L830.7 990.5 L827.4 987.0 L824.6 983.0 L822.1 978.9 L819.9 974.7 L817.9 970.4 L816.1 966.1 L814.6 961.6 L813.2 957.2 L812.0 952.7 L811.0 948.1 L809.7 943.7 L808.0 939.4 L805.9 935.2 L803.6 931.1 L801.3 926.6 L799.1 921.5 L797.0 916.0 L795.0 910.0 L793.5 905.5 L792.5 902.5 L792.0 901.0 Z" fill="none" stroke="#000" stroke-width="1.2"/>
</g>
<g id="green" stroke="#000" stroke-width="1" stroke-linejoin="round">
<!-- duct body -->
<path id="ductp" fill="url(#gDuct)" d="M762.7 734.7 L786.7 736 L805.3 745.3 L826.7 760 L856 782.7 L877.3 794.7 L890.7 808 L898.7 824 L912 856 L909 861 L827 897.4 L792 901.3 L766.7 849.3 L744 853.3 L706.7 869.3 L666.7 886.7 L640 892.8 L616 890.7 L600 885.3 L624 885.3 Z"/>
<path d="M762.7 734.7 L786.7 736 L805.3 745.3 L826.7 760 L856 782.7 L877.3 794.7 L890.7 808 L898.7 824 L912 856 L909 861 L827 897.4 L792 901.3 L766.7 849.3 L744 853.3 L706.7 869.3 L666.7 886.7 L640 892.8 L616 890.7 L600 885.3 L624 885.3 Z" fill="url(#mG)" stroke="none"/>
<path d="M762.7 734.7 L786.7 736 L805.3 745.3 L826.7 760 L856 782.7 L877.3 794.7 L890.7 808 L898.7 824 L912 856 L909 861 L827 897.4 L792 901.3 L766.7 849.3 L744 853.3 L706.7 869.3 L666.7 886.7 L640 892.8 L616 890.7 L600 885.3 L624 885.3 Z" fill="url(#mG3)" stroke="none"/>
<!-- dark blotches -->
<path fill="#000" stroke="none" d="M768.4 786.9 L791.9 779.7 L819 777.9 L842.5 781.5 L853.4 786.9 L837.1 789.7 L810 792.4 L791.9 794.2 Z"/>
<path fill="#000" stroke="none" opacity="0.6" d="M745 782 L768.4 786.9 L791.9 794.2 L780 798 L756 790 Z M853.4 786.9 L876 796 L890 810 L872 800 L850 792 Z M790 772 L820 768 L850 776 L842.5 781.5 L819 777.9 L791.9 779.7 Z"/>
<path fill="#000" stroke="none" d="M764.7 846.7 L782.8 837.6 L810 828.6 L824.4 835.8 L800.9 843 L779.2 852.1 L768.4 850.3 Z"/>
<path fill="#000" stroke="none" opacity="0.55" d="M640 886 L700 866 L744 848 L766.7 845 L766.7 849.3 L744 853.3 L706.7 869.3 L666.7 886.7 L640 892.8 L616 890.7 L606 886 Z M810 828.6 L850 812 L880 806 L860 822 L824.4 835.8 Z"/>
<!-- lower cylinder -->
<path fill="url(#mG2)" d="M766.7 849.3 L800 838 L840 830 L880 812 L898.7 824 L912 856 L909 861 L827 897.4 L792 901.3 Z"/>
<path fill="#00c030" stroke="#000" stroke-width="0.800" d="M826 838 L858 826 L886 815 L902 852 L884 866 L848 880 Z"/>
<path fill="none" stroke-width="0.800" d="M832 835.500 L850 879 M838 833.500 L845 881 M846 830.500 L864 874 M852 828 L860 875.500 M862 824.500 L880 868 M870 821.500 L876 869.500 M878 818.500 L894 860 M884 816 L888 864"/>
<path fill="#000" stroke="none" opacity="0.820" d="M770 850 L800 840 L826 838 L848 880 L826 892 L792 901.3 Z"/>
<path fill="none" stroke="#00d838" stroke-width="0.700" d="M776 858 L794 898 M782 856 L800 897 M789 853 L806 896 M796 850 L812 892 M803 848 L819 890 M811 845 L828 888 M819 842 L836 884 M826 840 L843 882"/>
<!-- strip -->
<path fill="#00c832" d="M777.4 687.2 L790.7 701.3 L762.5 735.6 L624 885.3 L607.6 868.5 Z"/>
<path fill="none" d="M783 694 L615 877 M765.8 702.6 L647.5 833.8 M693.8 778.5 L707.9 790"/>
<path fill="#00a028" d="M544.6 876.2 L607.6 868.5 L624 885.3 L600 885.3 L556 888 Z"/>
<path fill="none" d="M565 874 L575 886.5 L586 871.5 L597 885.5 L607.6 868.5"/>
</g>
<g id="cone" stroke="#000" stroke-width="1" stroke-linejoin="round">
<path fill="#c400c4" d="M792 901.3 L827 897.4 L909 861 L912 857.3 L921.3 880 L933 903 L905 905 L880 909 L862 920 L848 933 L836 950 L822 964 L809 941.3 Z"/>
<path fill="#a800a8" stroke-width="0.800" d="M792 901.3 L827 897.4 L827 942 Z"/>
<path fill="none" stroke-width="0.800" d="M826.7 893 L827 950 M826.7 893 L792 901.3 M827 950 L792 901.3 M827 950 L810.7 941.3 M832 892 L840 944 M832 892 L846 935 M832 892 L852 928 M832 892 L858 922 M832 892 L866 917 M832 892 L874 912 M832 892 L884 908 M832 892 L896 906 M832 892 L893.3 869.3 M912 857.3 L880 908 M912 857.3 L888 907 M912 857.3 L896 906 M912 857.3 L905 905 M912 857.3 L915 903 M912 857.3 L922 903 M912 857.3 L872 912 M846.7 888 L860 920 M792 901.3 L815 955 M800 903 L818 958"/>
</g>
<g id="ringleft">
<path d="M933 903 L905 905 L880 909 L862 920 L848 933 L836 950 L822 962 L800 950 L800 1010 L872 1010 L872 996 L862 965 L872 940 L892 924 L915 914 L940 908 Z" fill="url(#mM2)" stroke="none" clip-path="url(#cRing)"/>
<path d="M933 904 L905 906.500 L880 911 L863 922 L850 936 L840 953 L836 972" stroke="#000" stroke-width="4.500" stroke-dasharray="1 1" fill="none"/>
<path d="M826 962 Q836 968 846 988 M820 948 Q826 958 834 962" stroke="#000" stroke-width="3.500" stroke-dasharray="1 1" fill="none"/>
<path d="M940 908 L915 914 L892 924 L872 940 L862 965" stroke="#000" stroke-width="1.500" fill="none"/>
</g>
<g id="yellow" stroke="#000" stroke-width="1" stroke-linejoin="round">
<!-- silhouette -->
<path fill="#c8c800" d="M818 226 Q818 214 832 210.5 L895 184 L990 172 Q1010 168.5 1029 172.5 Q1046 178 1048.8 186 Q1049 192 1042.6 196.4 L1051.4 198.1 Q1057 193.5 1064 198.1 Q1068 203 1074 219 L1106 301 L1092 316 L1105.5 344 L1123 339 L1150 400 L1185 480 L1198 506 L1200.5 515 L1200.5 540 L1200.8 541.700 L1199 548.3 L1192 561 L1174.5 585 L1095.3 621.5 L1002 632.5 L986.5 623.5 L912 640 L897 649 L823 682 L810 673 L780 607 L742 620 L732 593 L730 573 L731 567.5 L743.5 549.4 L760 537.1 L774.9 529.1 L828.6 492.6 L838.9 488 L837.3 478.4 L857 453.9 L858.7 447.3 L869.6 446.4 L895.9 458.4 L902.7 468.1 L913.1 451.4 Z"/>
<!-- left side faces -->
<path fill="#a8a800" d="M820 232 L821 236 L917 224 L925.7 245.7 L862.9 272.4 L849.5 282 L848 293 L850.9 298.9 L846.9 299 Z"/>
<path fill="#a8a800" d="M850.9 298.9 L860.6 297.7 L886.3 356 L874.9 358.3 Z"/>
<path fill="#a8a800" d="M872.4 358.3 L874.9 358.3 L885.1 368.6 L898.9 367.4 L911.4 365.5 L967.4 341.7 L1003.1 425 L963.8 430.5 L911.4 451.2 Z"/>
<!-- arm top light face -->
<path fill="#d6d600" stroke="none" d="M1003.1 425 L963.8 430.5 L913.1 451.4 L901.7 467.4 L908.6 469.1 L940 454.9 L1001.7 426.5 Z"/>
<path fill="#e2e200" d="M730.9 567.5 L743.5 549.4 L760 537.1 L774.9 529.1 L828.6 492.600 L838.9 488 L841 489 L860.6 486.900 L779.7 544 L750 547 Z"/>
<path fill="none" d="M1003 425 L913.1 451.4 M779.7 544 L860.6 486.900 L908.6 469.100 L940 454.900 L1001.7 426.500 M901.7 467.400 L940 448.600 L1003 425"/>
<!-- top fillet band -->
<path fill="url(#hY)" d="M818 225 L821 217 L832 211 L922 203 L919 210 L917 224 L821 236 Z"/>
<path fill="none" d="M922 203 L990 172"/>
<path fill="url(#hD)" d="M873.3 202.200 L897 190.500 L927 185.800 L938.5 184.800 L928 188.500 L905 198.500 Z" stroke="none"/>
<!-- ledge double line -->
<path fill="none" d="M926.7 247.6 L864.8 274.3"/>
<!-- fillet corners hatched -->
<path fill="url(#hY2)" d="M862.9 272.4 L866 275.5 L861 280 L860.2 291 L860.6 297.7 L850.9 298.9 L848 293 L849.5 282 Z"/>
<path fill="url(#hY2)" d="M874.9 358.3 L886.3 356 L892 362.5 L898.9 367.4 L885.1 368.6 Z"/>
<!-- right recess -->
<path fill="#a8a800" d="M1046 394 L1118.6 360.7 L1150.7 435.7 L1079.3 469 Z"/>
<path fill="#d2d200" d="M1068.6 444.5 L1150.7 435.7 L1079.3 469 Z"/>
<!-- slot strip -->
<path fill="url(#hD)" d="M1091 315.5 L1023.3 340.5 L1025.5 345.5 L1092 318 Z" stroke="none"/>
<path fill="#e0e000" d="M1025.5 345.5 L1092 318 L1092.4 320.2 L1027 348.8 Z"/>
<path fill="none" d="M1091 315.5 L1023.3 340.5 L1027 348.8 L1092.4 320.2"/>
<!-- big hole top -->
<g>
<clipPath id="cH1"><ellipse cx="1010.3" cy="237.2" rx="47" ry="48.600"/></clipPath>
<ellipse cx="1010.3" cy="237.2" rx="47" ry="48.600" fill="url(#gHoleA)"/>
<g clip-path="url(#cH1)">
<polygon points="955,180 1065,180 1065,191 955,202.900" fill="#5e5e00" stroke="none"/>
<polygon points="955,202.900 1065,191 1065,196 955,207.900" fill="#767600" stroke="none"/>
<path d="M958.3 202.1 L1062.3 190.9 M958.3 205.6 L1062.3 194.4 M958.3 226.2 L1062.3 215.0 M958.3 234.9 L1062.3 223.7 M958.3 243.1 L1062.3 231.9 M958.3 251.3 L1062.3 240.1 M958.3 259.6 L1062.3 248.4 M958.3 266.1 L1062.3 254.9 M958.3 272.2 L1062.3 261.0 M958.3 277.1 L1062.3 265.9 M958.3 280.9 L1062.3 269.7 M958.3 283.7 L1062.3 272.5 M958.3 286.6 L1062.3 275.4 M958.3 289.1 L1062.3 277.9" stroke="#000" stroke-width="1" fill="none"/>
</g>
<polygon points="1036,197.300 1042.600,196.400 1051.400,198.100 1036,200" fill="#767600" stroke="none"/>
<polygon points="973.700,209.300 1050.600,200.600 1047.500,204.600 1047.600,209 966.300,219.500" fill="#000" stroke="none"/>
<polygon points="974.200,206.800 1051.400,198.100 1050.600,200.600 973.700,209.300" fill="#e8e800" stroke="none"/>
<path d="M971 214.400 L1046 205.200" stroke="#d8d800" stroke-width="1" stroke-dasharray="1 8" fill="none"/>
<ellipse cx="1010.3" cy="237.2" rx="47" ry="48.600" fill="none"/>
</g>
<!-- lower hole -->
<g>
<clipPath id="cH2"><ellipse cx="1136.5" cy="529.9" rx="46.400" ry="48.300"/></clipPath>
<ellipse cx="1136.5" cy="529.9" rx="46.400" ry="48.300" fill="url(#gHoleB)"/>
<g clip-path="url(#cH2)">
<path d="M1084.5 489.3 L1188.5 477.7 M1084.5 492.9 L1188.5 481.3 M1084.5 496.2 L1188.5 484.6 M1084.5 499.7 L1188.5 488.1 M1084.5 506.4 L1188.5 494.8 M1084.5 513.7 L1188.5 502.1 M1084.5 521.6 L1188.5 510.0 M1084.5 553.1 L1188.5 541.5 M1084.5 559.2 L1188.5 547.6 M1084.5 564.3 L1188.5 552.7 M1084.5 569.9 L1188.5 558.3 M1084.5 574.4 L1188.5 562.8 M1084.5 577.8 L1188.5 566.2 M1084.5 580.8 L1188.5 569.2" stroke="#000" stroke-width="1" fill="none"/>
<polygon points="1088,529.700 1186,518.300 1186,524.500 1088,535.300" fill="#000" stroke="none"/>
<polygon points="1088,535.300 1186,524.500 1186,530.200 1088,541.400" fill="#222f4f" stroke="none"/>
<polygon points="1088,541.400 1186,530.200 1186,537 1088,547.300" fill="#000" stroke="none"/>
</g>
<ellipse cx="1136.5" cy="529.9" rx="46.400" ry="48.300" fill="none"/>
<path d="M1181 519.500 L1182.800 519.200 L1185.600 523.100 L1193.500 523.700 L1198.500 521.400 L1203 521 L1203 536 L1200.800 536 L1196.900 532.100 L1187.900 531.600 L1184.500 533.200 L1181 533.500 Z" fill="#222f4f" stroke="none"/>
<path fill="none" d="M1182.800 519.200 L1185.600 523.100 L1193.500 523.700 L1198.500 521.400 L1200.200 517 M1184.500 533.200 L1187.900 531.600 L1196.900 532.100 L1200.800 536 L1200.800 541.700"/>
</g>
<!-- oval slot -->
<g transform="translate(906 312.500) rotate(-27)">
<rect x="-28" y="-19" width="56" height="38" rx="19" ry="19" fill="#c8c800"/>
<path d="M9 -19 A19 19 0 0 1 9 19 L3 19 A19 19 0 0 0 3 -19 Z" fill="url(#hY2)"/>
<rect x="-24.500" y="-10.500" width="35" height="21" rx="10.500" ry="10.500" fill="#a8a800"/>
<path d="M0 -10.500 A10.500 10.500 0 0 1 0 10.500 L-3 10.500 A10.500 10.500 0 0 0 -3 -10.500 Z" fill="url(#hY2)"/>
</g>
<!-- link arm lines -->
<path fill="none" d="M815 551.7 L966.7 508.3 M833 556.7 L976.7 516.7 M835 563 L973 526.7 M779.7 544 L771.7 566.7 L771.7 586.7 L780 606.7 L821.9 679.2"/>
<!-- arm left fillet -->
<path fill="url(#hY)" d="M730.9 573 L736 560 L749 547.6 L779.7 544 L771.6 567.5 L770.5 586 L731.5 591.5 L729 580 Z"/>
<path fill="#b4b400" d="M732 590 L771 586.7 L780 606.7 L742 620 Z"/>
<!-- upper screw hole -->
<g transform="translate(985 491.7) rotate(-20)">
<ellipse cx="0" cy="0" rx="26" ry="20" fill="#c8c800"/>
<path d="M9 -18.800 A26 20 0 0 1 9 18.800 L-1 20 A20 20 0 0 0 -1 -20 Z" fill="url(#hY2)"/>
<ellipse cx="-8" cy="0" rx="17.500" ry="11.500" fill="url(#hScrew0)"/>
<path d="M-25.500 0 A17.500 11.500 0 0 1 -2 -10.800 L-18 -2 Z" fill="#000" stroke="none"/>
</g>
<!-- lower-left screw hole -->
<g transform="translate(810 573.3) rotate(-20)">
<ellipse cx="0" cy="0" rx="27" ry="21.500" fill="#c8c800"/>
<path d="M9 -20.300 A27 21.500 0 0 1 9 20.300 L-1 21.500 A21 21.500 0 0 0 -1 -21.500 Z" fill="url(#hY2)"/>
<ellipse cx="-8" cy="0" rx="17.500" ry="11.500" fill="url(#hScrew0)"/>
<path d="M-25.500 0 A17.500 11.500 0 0 1 -2 -10.800 L-18 -2 Z" fill="#000" stroke="none"/>
</g>
<!-- dark underside -->
<path fill="#5e5e00" d="M1030 588 L1092.3 621.5 L1002.3 632.4 L986.5 623.5 L992.4 618.5 L984.5 602.7 L1008 598.7 Z"/>
<path fill="none" d="M1014 596.8 L1092.3 621.5"/>
<!-- bracket -->
<path fill="#c8c800" d="M961.7 549.3 L996.3 541.4 L1015.1 533.4 L1033 577 L1008 598 L984.5 602.7 Z"/>
<path fill="#a8a800" d="M998 541.7 L1015.1 533.4 L1033 577 L1011.8 576.2 Z"/>
<path fill="none" d="M996.3 541.4 L1011.4 576 L1012.2 584.9"/>
<ellipse cx="981.5" cy="567" rx="10" ry="10.5" fill="url(#hScrew)"/>
<!-- pocket above cylinder -->
<path fill="#a8a800" d="M955 533 L972 525 L982 545 L962 549 Z"/>
<!-- pyramid -->
<path fill="url(#hPyr)" d="M838.7 475 L857 453.900 L858.7 447.300 L869.6 446.400 L895.9 458.400 L902.7 468.100 L861.6 469.300 L854.7 473.900 Z"/>
<path fill="#f2f200" d="M861.6 469.300 L901 468.100 L860.4 486.400 Z"/>
<path fill="#e8e800" d="M854.7 473.900 L861.6 469.300 L860.4 486.400 L855.9 479 Z"/>
<path fill="none" d="M856.5 474 L858.5 484 M858.5 472 L859.8 485" stroke-width="0.800"/>
<path fill="#000" d="M838.7 475 L854.7 473.900 L855.9 479 L838.1 480.100 Z"/>
<path fill="#a8a800" d="M839.3 480.700 L854.7 479.600 L859.3 486.400 L840.4 488.700 Z"/>
<path fill="none" d="M869.6 446.400 L868.5 461 L861.6 469.300 M868.5 461 L901 468.100 M869.6 446.400 L900 466 M872 450 L899 463" stroke-width="0.900"/>
<path fill="#000" stroke="none" d="M858 450 L869 447 L868.5 458 L860 466 L855 462 Z" opacity="0.700"/>
<path fill="none" stroke="#e8e800" stroke-width="0.900" stroke-dasharray="1.500 1.500" d="M859.5 450 L867 449 M859 454 L867.5 452.500 M858 458 L867 456"/>
</g>
<g id="block" stroke="#000" stroke-width="1" stroke-linejoin="round">
<path fill="#a8dca8" d="M978.4 850.7 L1008.3 845.5 L1095.6 808.2 L1068 808.5 Z"/>
<path fill="#98c898" d="M1008.3 845.5 L1095.6 808.2 L1104.7 827.2 L1021.4 867.6 Z"/>
<path fill="#b6eab6" stroke-width="0.800" d="M1008.3 845.500 L1095.600 808.200 L1097 811 L1011.400 848 L1021.400 867.600 L1018.500 869 Z"/>
<path fill="#86ae86" d="M978.4 850.7 L1008.3 845.5 L1021.4 867.6 L992.7 881.9 L986.2 880.6 Z"/>
<path fill="#7aa07a" stroke-width="0.800" d="M1095.600 808.200 L1104.700 827.200 L1107 826 L1098 807.500 Z"/>
<path fill="none" stroke-width="1.600" stroke-dasharray="1 1" d="M1040 830 L1057 822.500"/>
<path fill="#98c898" d="M1066 925 L1073 923 L1074 930 L1069 932 Z" stroke-width="0.600"/>
</g>
<g id="fins" stroke="#000" stroke-width="1" stroke-linejoin="round">
<path fill="url(#gCore)" stroke="none" d="M1014.9 833.4 L1009.4 816.9 L1032.4 807.1 L1037.9 823.6 A12.5 1.6 -22.9 0 1 1014.9 833.4 Z"/><path fill="none" d="M1009.4 816.9 L1014.9 833.4 A12.5 1.6 -22.9 0 0 1037.9 823.6 L1032.4 807.1"/>
<ellipse cx="1022.7" cy="816.2" rx="71" ry="8.6" transform="rotate(-22.9 1022.7 816.2)" fill="url(#gRim)" />
<ellipse cx="1020.9" cy="812.0" rx="71" ry="8.6" transform="rotate(-22.9 1020.9 812.0)" fill="url(#gFin)" />
<path fill="url(#gCore)" stroke="none" d="M993.3 823.7 L986.9 808.9 L1042.1 785.5 L1048.5 800.3 A30 3.8 -22.9 0 1 993.3 823.7 Z"/><path fill="none" d="M986.9 808.9 L993.3 823.7 A30 3.8 -22.9 0 0 1048.5 800.3 L1042.1 785.5"/>
<ellipse cx="1016.3" cy="801.4" rx="71" ry="8.6" transform="rotate(-22.9 1016.3 801.4)" fill="url(#gRim)" />
<ellipse cx="1014.5" cy="797.2" rx="71" ry="8.6" transform="rotate(-22.9 1014.5 797.2)" fill="url(#gFin)" />
<path fill="url(#gCore)" stroke="none" d="M986.9 808.9 L980.5 794.1 L1035.7 770.7 L1042.1 785.5 A30 3.8 -22.9 0 1 986.9 808.9 Z"/><path fill="none" d="M980.5 794.1 L986.9 808.9 A30 3.8 -22.9 0 0 1042.1 785.5 L1035.7 770.7"/>
<ellipse cx="1009.9" cy="786.6" rx="71" ry="8.6" transform="rotate(-22.9 1009.9 786.6)" fill="url(#gRim)" />
<ellipse cx="1008.1" cy="782.4" rx="71" ry="8.6" transform="rotate(-22.9 1008.1 782.4)" fill="url(#gFin)" />
<path fill="url(#gCore)" stroke="none" d="M980.5 794.1 L974.1 779.3 L1029.3 755.9 L1035.7 770.7 A30 3.8 -22.9 0 1 980.5 794.1 Z"/><path fill="none" d="M974.1 779.3 L980.5 794.1 A30 3.8 -22.9 0 0 1035.7 770.7 L1029.3 755.9"/>
<ellipse cx="1003.5" cy="771.8" rx="71" ry="8.6" transform="rotate(-22.9 1003.5 771.8)" fill="url(#gRim)" />
<ellipse cx="1001.7" cy="767.6" rx="71" ry="8.6" transform="rotate(-22.9 1001.7 767.6)" fill="url(#gFin)" />
<path fill="url(#gCore)" stroke="none" d="M974.1 779.3 L967.7 764.5 L1022.9 741.1 L1029.3 755.9 A30 3.8 -22.9 0 1 974.1 779.3 Z"/><path fill="none" d="M967.7 764.5 L974.1 779.3 A30 3.8 -22.9 0 0 1029.3 755.9 L1022.9 741.1"/>
<ellipse cx="997.1" cy="757.0" rx="71" ry="8.6" transform="rotate(-22.9 997.1 757.0)" fill="url(#gRim)" />
<ellipse cx="995.3" cy="752.8" rx="71" ry="8.6" transform="rotate(-22.9 995.3 752.8)" fill="url(#gFin)" />
<path fill="url(#gCore)" stroke="none" d="M967.7 764.5 L961.3 749.7 L1016.5 726.3 L1022.9 741.1 A30 3.8 -22.9 0 1 967.7 764.5 Z"/><path fill="none" d="M961.3 749.7 L967.7 764.5 A30 3.8 -22.9 0 0 1022.9 741.1 L1016.5 726.3"/>
<ellipse cx="990.7" cy="742.2" rx="71" ry="8.6" transform="rotate(-22.9 990.7 742.2)" fill="url(#gRim)" />
<ellipse cx="988.9" cy="738.0" rx="71" ry="8.6" transform="rotate(-22.9 988.9 738.0)" fill="url(#gFin)" />
<path fill="url(#gCore)" stroke="none" d="M961.3 749.7 L954.9 734.9 L1010.1 711.5 L1016.5 726.3 A30 3.8 -22.9 0 1 961.3 749.7 Z"/><path fill="none" d="M954.9 734.9 L961.3 749.7 A30 3.8 -22.9 0 0 1016.5 726.3 L1010.1 711.5"/>
<ellipse cx="984.3" cy="727.4" rx="71" ry="8.6" transform="rotate(-22.9 984.3 727.4)" fill="url(#gRim)" />
<ellipse cx="982.5" cy="723.2" rx="71" ry="8.6" transform="rotate(-22.9 982.5 723.2)" fill="url(#gFin)" />
<path fill="url(#gCore)" stroke="none" d="M954.9 734.9 L948.5 720.1 L1003.7 696.7 L1010.1 711.5 A30 3.8 -22.9 0 1 954.9 734.9 Z"/><path fill="none" d="M948.5 720.1 L954.9 734.9 A30 3.8 -22.9 0 0 1010.1 711.5 L1003.7 696.7"/>
<ellipse cx="977.9" cy="712.6" rx="71" ry="8.6" transform="rotate(-22.9 977.9 712.6)" fill="url(#gRim)" />
<ellipse cx="976.1" cy="708.4" rx="71" ry="8.6" transform="rotate(-22.9 976.1 708.4)" fill="url(#gFin)" />
<path fill="url(#gCore)" stroke="none" d="M948.5 720.1 L942.1 705.3 L997.3 681.9 L1003.7 696.7 A30 3.8 -22.9 0 1 948.5 720.1 Z"/><path fill="none" d="M942.1 705.3 L948.5 720.1 A30 3.8 -22.9 0 0 1003.7 696.7 L997.3 681.9"/>
<ellipse cx="971.5" cy="697.8" rx="71" ry="8.6" transform="rotate(-22.9 971.5 697.8)" fill="url(#gRim)" />
<ellipse cx="969.7" cy="693.6" rx="71" ry="8.6" transform="rotate(-22.9 969.7 693.6)" fill="url(#gFin)" />
<path fill="url(#gCore)" stroke="none" d="M942.1 705.3 L935.7 690.5 L990.9 667.1 L997.3 681.9 A30 3.8 -22.9 0 1 942.1 705.3 Z"/><path fill="none" d="M935.7 690.5 L942.1 705.3 A30 3.8 -22.9 0 0 997.3 681.9 L990.9 667.1"/>
<ellipse cx="965.1" cy="683.0" rx="71" ry="8.6" transform="rotate(-22.9 965.1 683.0)" fill="url(#gRim)" />
<ellipse cx="963.3" cy="678.8" rx="71" ry="8.6" transform="rotate(-22.9 963.3 678.8)" fill="url(#gFin)" />
<path fill="url(#gCore)" stroke="none" d="M935.7 690.5 L929.3 675.7 L984.5 652.3 L990.9 667.1 A30 3.8 -22.9 0 1 935.7 690.5 Z"/><path fill="none" d="M929.3 675.7 L935.7 690.5 A30 3.8 -22.9 0 0 990.9 667.1 L984.5 652.3"/>
<ellipse cx="958.7" cy="668.2" rx="71" ry="8.6" transform="rotate(-22.9 958.7 668.2)" fill="url(#gRim)" />
<ellipse cx="956.9" cy="664.0" rx="71" ry="8.6" transform="rotate(-22.9 956.9 664.0)" fill="url(#gFin)" />
<path fill="url(#gCore)" stroke="none" d="M929.3 675.7 L922.9 660.9 L978.1 637.5 L984.5 652.3 A30 3.8 -22.9 0 1 929.3 675.7 Z"/><path fill="none" d="M922.9 660.9 L929.3 675.7 A30 3.8 -22.9 0 0 984.5 652.3 L978.1 637.5"/>
<ellipse cx="952.8" cy="655.7" rx="50" ry="6.2" transform="rotate(-22.9 952.8 655.7)" fill="url(#gRim)" />
<ellipse cx="951.0" cy="651.5" rx="50" ry="6.2" transform="rotate(-22.9 951.0 651.5)" fill="url(#gFin)" />
<path fill="url(#gCore)" stroke="none" d="M923.4 663.2 L915.4 645.2 L970.6 621.8 L978.6 639.8 A30 3.8 -22.9 0 1 923.4 663.2 Z"/><path fill="none" d="M915.4 645.2 L923.4 663.2 A30 3.8 -22.9 0 0 978.6 639.8 L970.6 621.8"/>
<path fill="url(#gCyl)" stroke="none" d="M898.1 656.1 L873.8 602.1 L966.2 563.1 L990.5 617.1 A50.2 6.3 -22.9 0 1 898.1 656.1 Z"/><path fill="none" d="M873.8 602.1 L898.1 656.1 A50.2 6.3 -22.9 0 0 990.5 617.1 L966.2 563.1"/>
<path fill="none" d="M892.5 643.8 A50.2 7.5 -22.9 0 0 985.0 604.8"/>
<path fill="none" d="M891.9 642.5 A50.2 7.5 -22.9 0 0 984.4 603.4"/>
<ellipse cx="920" cy="582.6" rx="50.2" ry="7.5" transform="rotate(-22.9 920 582.6)" fill="#a8e0a8"/>
<path fill="url(#gCyl)" stroke="none" d="M891.3 595.1 L879.3 568.1 L955.7 535.9 L967.7 562.9 A41.5 5.2 -22.9 0 1 891.3 595.1 Z"/><path fill="none" d="M879.3 568.1 L891.3 595.1 A41.5 5.2 -22.9 0 0 967.7 562.9 L955.7 535.9"/>
</g>
<g id="yclamp" stroke="#000" stroke-width="1" stroke-linejoin="round">
<path fill="#9c9c00" d="M861.8 602.7 L872.7 598.7 L898.4 650.2 L878.6 646.2 Z"/>
<path fill="url(#hScrew)" d="M880 612 L886 626 L895 645 L889 647 L876 618 Z" stroke="none"/>
<ellipse cx="870.5" cy="617" rx="6.5" ry="9.5" fill="url(#hScrew)" transform="rotate(-20 870.5 617)"/>
<path fill="#c8c800" d="M878.6 646.2 L909.3 635.4 L912.2 640.3 L897.4 648.2 L887.5 652.2 L880 650 Z"/>
<path fill="none" d="M828 588 L861.8 602.7 L878.6 646.2"/>
<path fill="url(#hScrew)" d="M982.5 592.8 L1004.3 590.8 L1008.2 598.7 L984.5 602.7 Z" stroke="none"/>
<path fill="url(#hScrew)" d="M968.6 584.9 L978.5 582.9 L982.5 598.7 L974.6 600.7 Z" stroke="none"/>
</g>
<g id="gray" stroke="#000" stroke-width="1" stroke-linejoin="round">
<path fill="#8c8c8c" d="M655.3 597.3 L687.3 602 L678 578 L707.3 618.7 L663.3 623.3 Z"/>
<path fill="#9c9c9c" d="M547.3 585.3 L576.7 580.5 L687.3 602.5 L656.5 597.5 L658 605.5 L550 587.5 Z"/>
<path fill="none" stroke-width="2.4" d="M577 580.2 L687.3 602.6 M550 587.2 L656.6 605.6"/>
<path fill="#9a9a9a" d="M538.7 568.7 L639.3 522.7 L671.3 519.1 L570.7 565.3 Z"/>
<path fill="#8c8c8c" d="M538.7 568.7 L570.7 565.3 L576.7 579.3 L547.3 585.3 Z"/>
<path fill="#969696" d="M570.7 565.3 L671.3 520 L694 571.3 L678 578 L687.3 602 L576.7 579.3 Z"/>
<path fill="none" stroke-width="2" d="M571 565.6 L671.3 520.4"/>
<path fill="none" stroke="#1a1a1a" stroke-width="1.6" stroke-dasharray="1.5 1" d="M555.3 561.3 L578 552.7 M576 560.7 L598 551.3 M607.3 538 L629.3 529.3 M626 537.3 L648.7 528"/>
<path fill="#c2c2c2" d="M678 578 L694 571.3 L723.3 612.7 L707.3 618.7 Z"/>
<path fill="#a6a6a6" d="M707.3 618.7 L723.3 612.7 L734.3 638.5 L729 630 Z"/>
</g>
<g id="cyan" stroke="#000" stroke-width="1" stroke-linejoin="round">
<path fill="#a8a800" stroke="none" d="M733.5 600 L775.4 600 L790 630 L779.2 626.7 L761 633.5 L750.3 629.7 L744 632 L739.6 619.8 Z"/>
<path fill="#000" stroke="none" d="M738.1 635 L747.2 653.3 L751.8 656.4 L780.8 688.4 L777.4 687.2 L734 641 Z"/>
<path fill="url(#hScrew)" stroke="none" d="M729 621 L740 619.5 L744.5 631.5 L735.5 637 Z"/>
<path fill="#00969c" d="M751.8 656.4 L764 650.3 L777.7 653.3 L794.5 644.2 L805.1 668.6 L817.3 668.6 L832.6 705.1 L809.7 715.8 L779.2 749.3 L768.6 746.3 L762.5 735.6 L790.7 701.3 L780.8 688.4 L778.5 686.1 Z"/>
<path fill="url(#mC)" d="M738.1 635 L750.3 629.7 L756.4 632 L764 650.3 L751.8 656.4 L747.2 653.3 Z"/>
<path fill="url(#mC)" d="M761 633.5 L779.2 626.7 L786.9 632.8 L794.5 644.2 L777.7 653.3 L767 647.2 Z"/>
<path fill="#000" stroke="none" d="M761 636 L767 647.2 L772 650 L770 640 Z M747.2 653.3 L751.8 656.4 L760 664 L752 654 Z"/>
<path fill="#00b4b8" d="M784.6 693 L805.1 690 L790 701.3 Z"/>
<path fill="none" stroke-width="0.8" d="M777.7 653.3 L788 675 M794.5 644.2 L790 676 M764 650.3 L788 675 M751.8 656.4 L790 676 M758 662 L788 678 M805.1 668.6 L788 675 L800 680 M817.3 668.6 L800 680 M800 680 L832.6 705.1 M805.1 690 L809.7 715.8 M805.1 690 L832.6 705.1 M805.1 690 L790.7 701.3 M800 680 L805.1 690 M772 678 L805.1 690 M805.1 690 L779.2 749.3 M800 697 L768.6 746.3 M762.5 735.6 L768.6 746.3"/>
<path fill="#007a80" stroke-width="0.8" d="M762.5 735.6 L768.6 746.3 L779.2 749.3 L772 738 Z"/>
</g>
<g id="orange" stroke="#000" stroke-width="1" stroke-linejoin="round">
<path fill="#804000" d="M475.7 809.4 L540 802.9 L607.6 868.5 L544.6 876.2 Z"/>
<path fill="#cc6600" d="M710.5 619.8 L777.4 687.2 L607.6 868.5 L540 802.9 Z"/>
<path fill="#ea7600" d="M646.2 625.9 L710.5 619.8 L540 802.9 L475.7 809.4 Z"/>
<ellipse cx="0" cy="0" rx="102" ry="16" fill="url(#gOrH)" transform="translate(593.4 712.6) rotate(-44.2)"/>
<rect x="-8.5" y="-1.8" width="17" height="3.6" rx="1.8" fill="#ea7600" transform="translate(636.5 643.6) rotate(-42)"/>
<rect x="-8.5" y="-1.8" width="17" height="3.6" rx="1.8" fill="#ea7600" transform="translate(689.2 637.8) rotate(-42)"/>
<rect x="-8.5" y="-1.8" width="17" height="3.6" rx="1.8" fill="#ea7600" transform="translate(499.6 790.1) rotate(-42)"/>
<rect x="-8.5" y="-1.8" width="17" height="3.6" rx="1.8" fill="#ea7600" transform="translate(551.5 784.5) rotate(-42)"/>
</g>
<g id="axes" shape-rendering="auto" font-family="Liberation Sans, sans-serif">
<!-- small green LL marks -->
<g stroke="#00d040" stroke-width="1.2" fill="none" shape-rendering="crispEdges">
<path d="M743 967 L741.5 983.5 L745.5 983.5 L746.5 967 M755.5 970 L753.5 986 L758 986.5 L759 970.5"/>
<path d="M758 987 L770 991" stroke-dasharray="2 2"/>
<path d="M767 988 L775 992 L767 993 Z M778 991 L787 996 L778 996.5 Z" fill="#00d040" stroke="none"/>
</g>
<!-- origin axes on plane -->
<line x1="1355" y1="848" x2="1329.5" y2="789" stroke="#18a8b8" stroke-width="2.2"/>
<polygon points="1326,781 1334.5,789.5 1327,792.5" fill="#18a8b8"/>
<line x1="1355" y1="849.5" x2="1334" y2="859.5" stroke="#c03038" stroke-width="2.6"/>
<polygon points="1324.5,864 1333.5,856 1336,862.5" fill="#c03038"/>
<circle cx="1355.5" cy="848.5" r="3" fill="#8a9098"/>
<path d="M1357 848.5 L1365 847" stroke="#10b020" stroke-width="3.4"/>
<circle cx="1365.500" cy="847" r="3.6" fill="#18c028"/>
<text x="1317" y="778.500" font-size="11" fill="#ccd2dc" fill-opacity="0.9">Z</text>
<text x="1315.500" y="870.500" font-size="11" fill="#ccd2dc" fill-opacity="0.9">X</text>
<text x="1367" y="852.500" font-size="11" fill="#ccd2dc" fill-opacity="0.9">Y</text>
<!-- bottom-left triad -->
<polygon points="87,940.7 109.3,930.7 117,930.7 125.700,951.4 95.700,961.4" fill="#ffffff" fill-opacity="0.14" stroke="#d0d4dc" stroke-width="1"/>
<line x1="118.600" y1="952" x2="94" y2="893.500" stroke="#00d8dc" stroke-width="2.6"/>
<polygon points="90.200,884.800 97.300,893.600 91,896.300" fill="#20f0f4"/>
<line x1="118" y1="955.500" x2="98" y2="964.500" stroke="#e8e000" stroke-width="1.6"/>
<line x1="117" y1="953.500" x2="96" y2="963" stroke="#e01010" stroke-width="2.800"/>
<polygon points="89,967.500 96.500,960.500 99,967.500" fill="#f01010"/>
<circle cx="118.500" cy="952.500" r="2.800" fill="#8a8a8a"/>
<path d="M120 952.800 L128 952.500" stroke="#00c010" stroke-width="3.600"/>
<path d="M127 948.500 L134 952 L128.500 956.800 Z" fill="#00d818"/>
<text x="82.500" y="882" font-size="11" fill="#ccd2dc" fill-opacity="0.9">Z</text>
<text x="79.500" y="975" font-size="11" fill="#ccd2dc" fill-opacity="0.9">X</text>
<text x="130.500" y="957" font-size="11" fill="#ccd2dc" fill-opacity="0.9">Y</text>
</g>
</svg></div>
<svg class="ic" style="left:22.0px;top:67.0px" width="22" height="22" viewBox="-11.0 -11.0 22 22"><path d="M-6.500 -8.500h8.500l5 5v12.500h-13.500z" fill="#fff" stroke="#000" stroke-width="1.300"/><path d="M-5.500 -2 L5.500 -2 L5.500 8 L-5.500 8z" fill="#c8d4f4" opacity="0.900"/><path d="M2 -8.500v5h5" fill="#e8ecf8" stroke="#000" stroke-width="1"/></svg>
<svg class="ic" style="left:48.0px;top:67.0px" width="22" height="22" viewBox="-11.0 -11.0 22 22"><path d="M-9 8 L-7 -3 L7 -4 L5 8z" fill="#f6cf5a" stroke="#c89820" stroke-width="0.800"/><path d="M-9 8 L-5 0 L9 -1 L5 8z" fill="#fbe08a" stroke="#c89820" stroke-width="0.800"/><path d="M-5 -1 Q-4 -8 3 -7 L3 -9.500 L9 -5 L3 -1 L3 -3.500 Q-2 -4 -3 0z" fill="#32b432" stroke="#1a7a1a" stroke-width="0.700"/></svg>
<svg class="ic" style="left:74.0px;top:67.0px" width="22" height="22" viewBox="-11.0 -11.0 22 22"><path d="M-9 -8h5l1 1.500h3v5h-9z" fill="#f8d870" stroke="#c89820" stroke-width="0.700"/><path d="M-9 1h5l1 1.500h3v5.500h-9z" fill="#f8d870" stroke="#c89820" stroke-width="0.700"/><path d="M1 -7h3v14h-3" fill="none" stroke="#40c040" stroke-width="1.200"/><path d="M1 -4h5l3 3v8h-8z" fill="#eef2fc" stroke="#8890a8" stroke-width="0.800"/></svg>
<svg class="ic" style="left:99.5px;top:67.0px" width="22" height="22" viewBox="-11.0 -11.0 22 22"><rect x="-8" y="-8" width="16" height="16" rx="1" fill="#3c5aa0" stroke="#22386c" stroke-width="0.800"/><rect x="-6" y="-8" width="12" height="8.500" fill="#f4f4f4"/><rect x="-6" y="-8" width="12" height="2.200" fill="#e04040"/><path d="M-5 -4h10M-5 -2h10" stroke="#b0b0b0" stroke-width="0.700"/><rect x="-4" y="3" width="8" height="5" fill="#c8ccd4"/><rect x="-2.500" y="4" width="2" height="3" fill="#3c5aa0"/></svg>
<svg class="ic" style="left:125.5px;top:67.0px" width="22" height="22" viewBox="-11.0 -11.0 22 22"><g transform="translate(3.500 -3.500) scale(0.680)"><rect x="-8" y="-8" width="16" height="16" rx="1" fill="#3c5aa0" stroke="#22386c" stroke-width="0.800"/><rect x="-6" y="-8" width="12" height="8.500" fill="#f4f4f4"/><rect x="-6" y="-8" width="12" height="2.200" fill="#e04040"/><path d="M-5 -4h10M-5 -2h10" stroke="#b0b0b0" stroke-width="0.700"/><rect x="-4" y="3" width="8" height="5" fill="#c8ccd4"/><rect x="-2.500" y="4" width="2" height="3" fill="#3c5aa0"/></g><g transform="translate(-3 3) scale(0.680)"><rect x="-8" y="-8" width="16" height="16" rx="1" fill="#3c5aa0" stroke="#22386c" stroke-width="0.800"/><rect x="-6" y="-8" width="12" height="8.500" fill="#f4f4f4"/><rect x="-6" y="-8" width="12" height="2.200" fill="#e04040"/><path d="M-5 -4h10M-5 -2h10" stroke="#b0b0b0" stroke-width="0.700"/><rect x="-4" y="3" width="8" height="5" fill="#c8ccd4"/><rect x="-2.500" y="4" width="2" height="3" fill="#3c5aa0"/></g></svg>
<svg class="ic" style="left:151.5px;top:67.0px" width="22" height="22" viewBox="-11.0 -11.0 22 22"><g transform="translate(-4.500 -4.500) scale(0.600)"><rect x="-8" y="-8" width="16" height="16" rx="1" fill="#3c5aa0" stroke="#22386c" stroke-width="0.800"/><rect x="-6" y="-8" width="12" height="8.500" fill="#f4f4f4"/><rect x="-6" y="-8" width="12" height="2.200" fill="#e04040"/><path d="M-5 -4h10M-5 -2h10" stroke="#b0b0b0" stroke-width="0.700"/><rect x="-4" y="3" width="8" height="5" fill="#c8ccd4"/><rect x="-2.500" y="4" width="2" height="3" fill="#3c5aa0"/></g><path d="M2 0 Q8 -1 7 -5 Q5 -9 0 -7 L0.500 -9.500 L-4 -5.500 L1.500 -3.500 L1 -5.200 Q4 -6 5 -4 Q5 -2 2 -2z" fill="#32b432" stroke="#1a7a1a" stroke-width="0.600"/><path d="M0 2 L5 0 L9 2 L9 7 L4 9 L0 7z" fill="#a8acb4" stroke="#50545c" stroke-width="0.800"/><path d="M0 2 L4 4 L9 2 M4 4 L4 9" fill="none" stroke="#50545c" stroke-width="0.800"/></svg>
<svg class="ic" style="left:178.0px;top:67.0px" width="22" height="22" viewBox="-11.0 -11.0 22 22"><rect x="-5" y="-8" width="10" height="8" fill="#f8f8ff" stroke="#7080a0" stroke-width="0.800"/><path d="M0 -9 L3.500 -5.500 L1.200 -5.500 L1.200 -3 L-1.200 -3 L-1.200 -5.500 L-3.500 -5.500z" fill="#30c030"/><path d="M-9 0 Q-9 -2 -7 -2 L7 -2 Q9 -2 9 0 L9 5 L-9 5z" fill="#d0d0d0" stroke="#707070" stroke-width="0.800"/><rect x="-7.500" y="4" width="15" height="4.500" fill="#f4f4f4" stroke="#808080" stroke-width="0.800"/></svg>
<svg class="ic" style="left:203.5px;top:67.0px" width="22" height="22" viewBox="-11.0 -11.0 22 22"><circle cx="-1" cy="-1" r="7.200" fill="#a8c8e8" stroke="#5a9a30" stroke-width="3.200"/><circle cx="-1" cy="-1" r="5" fill="#c4dcf4" stroke="#8090a8" stroke-width="0.800"/><path d="M3.500 3.500 L9 9" stroke="#a0a4ac" stroke-width="2.600" stroke-linecap="round"/></svg>
<svg class="ic" style="left:229.0px;top:67.0px" width="22" height="22" viewBox="-11.0 -11.0 22 22"><rect x="-8.500" y="-8" width="17" height="16" fill="#e4ecfc" stroke="#2030c8" stroke-width="1.400"/><path d="M0 -8v16" stroke="#2030c8" stroke-width="1.400"/><rect x="-7" y="-6.500" width="5.500" height="13" fill="#f8faff"/><rect x="1.500" y="-6.500" width="5.500" height="13" fill="#f8faff"/></svg>
<svg class="ic" style="left:273.0px;top:67.0px" width="22" height="22" viewBox="-11.0 -11.0 22 22"><ellipse cx="0" cy="4" rx="8" ry="5" fill="#c8a078" stroke="#705030" stroke-width="0.800"/><circle cx="-3.500" cy="5" r="1.800" fill="#2040e0"/><circle cx="1" cy="6" r="1.800" fill="#20b020"/><circle cx="4.500" cy="3" r="1.800" fill="#e02020"/><path d="M3 2 L9 -8" stroke="#8a5020" stroke-width="1.800"/><path d="M-8 -7h9l2 2h-9z M-8 -4h9l2 2h-9z M-8 -1h9l2 2h-9z" fill="#8890f0" stroke="#fff" stroke-width="0.500"/></svg>
<svg class="ic" style="left:299.0px;top:67.0px" width="22" height="22" viewBox="-11.0 -11.0 22 22"><path d="M-6 -6h7l3 3v9h-10z" fill="#dfe8f8" stroke="#000" stroke-width="1"/><path d="M-1 -9h7l3 3v10h-10z" fill="#b8ccec" stroke="#000" stroke-width="1"/><g transform="translate(-1 6.8)"><path d="M-9.500 1.500 Q-4 -7 4 -6.500 Q9 -5 10 -0.500 Q5 4 -2 4 Q-6 3.500 -9.500 1.500Z" fill="#a8aec8"/><path d="M-9 0.500 Q-3 -9.500 5 -7.500 Q9 -6 10 -1.500" fill="none" stroke="#34344e" stroke-width="1.900"/><path d="M-9 1.800 Q-2 5 5 3 Q8 2 10 -0.500" fill="none" stroke="#7a7a98" stroke-width="0.900"/><circle cx="0.500" cy="-1.800" r="4.300" fill="#3f66a6"/><circle cx="0.500" cy="-1.800" r="1.900" fill="#141c34"/><circle cx="-0.800" cy="-3.200" r="0.900" fill="#e8f0ff"/></g></svg>
<svg class="ic" style="left:325.0px;top:67.0px" width="22" height="22" viewBox="-11.0 -11.0 22 22"><g transform="translate(0 -1.2)"><path d="M-9.500 1.500 Q-4 -7 4 -6.500 Q9 -5 10 -0.500 Q5 4 -2 4 Q-6 3.500 -9.500 1.500Z" fill="#a8aec8"/><path d="M-9 0.500 Q-3 -9.500 5 -7.500 Q9 -6 10 -1.500" fill="none" stroke="#34344e" stroke-width="1.900"/><path d="M-9 1.800 Q-2 5 5 3 Q8 2 10 -0.500" fill="none" stroke="#7a7a98" stroke-width="0.900"/><circle cx="0.500" cy="-1.800" r="4.300" fill="#3f66a6"/><circle cx="0.500" cy="-1.800" r="1.900" fill="#141c34"/><circle cx="-0.800" cy="-3.200" r="0.900" fill="#e8f0ff"/></g><path d="M-9 0h3v-3h2.600v3h3v2.600h-3v3h-2.600v-3h-3z" fill="#6ee030" stroke="#3c9c10" stroke-width="0.500"/><path d="M2 2 Q8 0 8 5 Q6 8 3 5 M3 5 L7 9" fill="none" stroke="#3c6cd0" stroke-width="1.400"/></svg>
<svg class="ic" style="left:350.0px;top:67.0px" width="22" height="22" viewBox="-11.0 -11.0 22 22"><g transform="translate(0 -1.2)"><path d="M-9.500 1.500 Q-4 -7 4 -6.500 Q9 -5 10 -0.500 Q5 4 -2 4 Q-6 3.500 -9.500 1.500Z" fill="#a8aec8"/><path d="M-9 0.500 Q-3 -9.500 5 -7.500 Q9 -6 10 -1.500" fill="none" stroke="#34344e" stroke-width="1.900"/><path d="M-9 1.800 Q-2 5 5 3 Q8 2 10 -0.500" fill="none" stroke="#7a7a98" stroke-width="0.900"/><circle cx="0.500" cy="-1.800" r="4.300" fill="#3f66a6"/><circle cx="0.500" cy="-1.800" r="1.900" fill="#141c34"/><circle cx="-0.800" cy="-3.200" r="0.900" fill="#e8f0ff"/></g><rect x="-9" y="5" width="10" height="2.800" fill="#f4e800" stroke="#a89c00" stroke-width="0.500"/><path d="M2 2 Q8 0 8 5 Q6 8 3 5 M3 5 L7 9" fill="none" stroke="#3c6cd0" stroke-width="1.400"/></svg>
<svg class="ic" style="left:376.0px;top:67.0px" width="22" height="22" viewBox="-11.0 -11.0 22 22"><g transform="translate(0 -2.2)"><path d="M-9.500 1.500 Q-4 -7 4 -6.500 Q9 -5 10 -0.500 Q5 4 -2 4 Q-6 3.500 -9.500 1.500Z" fill="#a8aec8"/><path d="M-9 0.500 Q-3 -9.500 5 -7.500 Q9 -6 10 -1.500" fill="none" stroke="#34344e" stroke-width="1.900"/><path d="M-9 1.800 Q-2 5 5 3 Q8 2 10 -0.500" fill="none" stroke="#7a7a98" stroke-width="0.900"/><circle cx="0.500" cy="-1.800" r="4.300" fill="#3f66a6"/><circle cx="0.500" cy="-1.800" r="1.900" fill="#141c34"/><circle cx="-0.800" cy="-3.200" r="0.900" fill="#e8f0ff"/></g><rect x="-9" y="-3" width="6.500" height="12" rx="2" fill="#000"/><rect x="2.500" y="-3" width="6.500" height="12" rx="2" fill="#000"/><circle cx="-5.800" cy="0" r="2" fill="#f4c000"/><circle cx="-5.800" cy="5.500" r="2" fill="#10e010"/><circle cx="5.800" cy="0" r="2" fill="#f01010"/><circle cx="5.800" cy="5.500" r="2" fill="#f4c000"/><path d="M-6 -3 Q0 -8 6 -3" fill="none" stroke="#000" stroke-width="1.600"/></svg>
<svg class="ic" style="left:402.0px;top:67.0px" width="22" height="22" viewBox="-11.0 -11.0 22 22"><g transform="translate(0 -2.2)"><path d="M-9.500 1.500 Q-4 -7 4 -6.500 Q9 -5 10 -0.500 Q5 4 -2 4 Q-6 3.500 -9.500 1.500Z" fill="#a8aec8"/><path d="M-9 0.500 Q-3 -9.500 5 -7.500 Q9 -6 10 -1.500" fill="none" stroke="#34344e" stroke-width="1.900"/><path d="M-9 1.800 Q-2 5 5 3 Q8 2 10 -0.500" fill="none" stroke="#7a7a98" stroke-width="0.900"/><circle cx="0.500" cy="-1.800" r="4.300" fill="#3f66a6"/><circle cx="0.500" cy="-1.800" r="1.900" fill="#141c34"/><circle cx="-0.800" cy="-3.200" r="0.900" fill="#e8f0ff"/></g><path d="M-5 3 Q-5 -2 1 -2 L1 -4 L6 -0.500 L1 3 L1 1 Q-2 1 -2 3z" fill="#40c040" stroke="#208020" stroke-width="0.600"/><path d="M6 3 Q6 9 -1 8.500 L-1 10 L-6 6.500 L-1 3.500 L-1 5.500 Q3 6 3 3z" fill="#e8e020" stroke="#909000" stroke-width="0.600"/></svg>
<svg class="ic" style="left:428.0px;top:67.0px" width="22" height="22" viewBox="-11.0 -11.0 22 22"><g transform="translate(0 -1.2)"><path d="M-9.500 1.500 Q-4 -7 4 -6.500 Q9 -5 10 -0.500 Q5 4 -2 4 Q-6 3.500 -9.500 1.500Z" fill="#a8aec8"/><path d="M-9 0.500 Q-3 -9.500 5 -7.500 Q9 -6 10 -1.500" fill="none" stroke="#34344e" stroke-width="1.900"/><path d="M-9 1.800 Q-2 5 5 3 Q8 2 10 -0.500" fill="none" stroke="#7a7a98" stroke-width="0.900"/><circle cx="0.500" cy="-1.800" r="4.300" fill="#3f66a6"/><circle cx="0.500" cy="-1.800" r="1.900" fill="#141c34"/><circle cx="-0.800" cy="-3.200" r="0.900" fill="#e8f0ff"/></g><path d="M-9.5 -2h3v-3h2.600v3h3v2.600h-3v3h-2.600v-3h-3z" fill="#6ee030" stroke="#3c9c10" stroke-width="0.500"/><path d="M-3 9 L3 0" stroke="#202020" stroke-width="1.300"/><rect x="1" y="6" width="8" height="2.800" fill="#f4e800" stroke="#a89c00" stroke-width="0.500"/></svg>
<svg class="ic" style="left:454.0px;top:67.0px" width="22" height="22" viewBox="-11.0 -11.0 22 22"><g transform="translate(0 -1.2)"><path d="M-9.500 1.500 Q-4 -7 4 -6.500 Q9 -5 10 -0.500 Q5 4 -2 4 Q-6 3.500 -9.500 1.500Z" fill="#a8aec8"/><path d="M-9 0.500 Q-3 -9.500 5 -7.500 Q9 -6 10 -1.500" fill="none" stroke="#34344e" stroke-width="1.900"/><path d="M-9 1.800 Q-2 5 5 3 Q8 2 10 -0.500" fill="none" stroke="#7a7a98" stroke-width="0.900"/><circle cx="0.500" cy="-1.800" r="4.300" fill="#3f66a6"/><circle cx="0.500" cy="-1.800" r="1.900" fill="#141c34"/><circle cx="-0.800" cy="-3.200" r="0.900" fill="#e8f0ff"/></g><path d="M-2 0.5h3v-3h2.600v3h3v2.600h-3v3h-2.600v-3h-3z" fill="#6ee030" stroke="#3c9c10" stroke-width="0.500"/></svg>
<svg class="ic" style="left:480.0px;top:67.0px" width="22" height="22" viewBox="-11.0 -11.0 22 22"><g transform="translate(0 -1.2)"><path d="M-9.500 1.500 Q-4 -7 4 -6.500 Q9 -5 10 -0.500 Q5 4 -2 4 Q-6 3.500 -9.500 1.500Z" fill="#a8aec8"/><path d="M-9 0.500 Q-3 -9.500 5 -7.500 Q9 -6 10 -1.500" fill="none" stroke="#34344e" stroke-width="1.900"/><path d="M-9 1.800 Q-2 5 5 3 Q8 2 10 -0.500" fill="none" stroke="#7a7a98" stroke-width="0.900"/><circle cx="0.500" cy="-1.800" r="4.300" fill="#3f66a6"/><circle cx="0.500" cy="-1.800" r="1.900" fill="#141c34"/><circle cx="-0.800" cy="-3.200" r="0.900" fill="#e8f0ff"/></g><rect x="-1" y="3" width="9" height="2.800" fill="#f4e800" stroke="#a89c00" stroke-width="0.500"/></svg>
<svg class="ic" style="left:523.0px;top:67.0px" width="22" height="22" viewBox="-11.0 -11.0 22 22"><path d="M-9 3 L1 -5 L9 -1 L0 8z" fill="#e4eaf4" stroke="#a8b0c0" stroke-width="0.700"/><path d="M-4 3 L-4 -8" stroke="#2050e0" stroke-width="1.500"/><path d="M-6 -6 L-4 -9.500 L-2 -6z" fill="#2050e0"/><path d="M-4 3 L4 -2" stroke="#20b020" stroke-width="1.500"/><path d="M2.500 -3.500 L6 -3.300 L4.500 -0.200z" fill="#20b020"/><path d="M-4 3 L3 8" stroke="#e02020" stroke-width="1.500"/><path d="M1.500 8.800 L5 9.300 L3.500 6z" fill="#e02020"/><circle cx="-4" cy="3" r="1.600" fill="#fff" stroke="#404040" stroke-width="0.700"/></svg>
<svg class="ic" style="left:549.0px;top:67.0px" width="22" height="22" viewBox="-11.0 -11.0 22 22"><path d="M-3 -3 L4 -8 L9 -5 L3 0z" fill="#e4eaf4" stroke="#a8b0c0" stroke-width="0.600"/><path d="M2 -3 L2 -9.500" stroke="#2050e0" stroke-width="1.200"/><path d="M2 -3 L6 -1" stroke="#e02020" stroke-width="1.200"/><path d="M2 -3 L6 -6" stroke="#20b020" stroke-width="1.200"/><rect x="1" y="3" width="8" height="5.500" fill="#d8dce4" stroke="#808890" stroke-width="0.900"/><path d="M-9 7 L-3 -1 L-5 -2.500 L2 -4 L1.500 3 L-0.500 1.500 L-6 9z" fill="#30b030" stroke="#106010" stroke-width="0.700"/></svg>
<svg class="ic" style="left:575.0px;top:67.0px" width="22" height="22" viewBox="-11.0 -11.0 22 22"><path d="M-2 -4 L5 -9 L10 -6 L4 -1z" fill="#e4eaf4" stroke="#a8b0c0" stroke-width="0.600"/><path d="M3 -4 L3 -10" stroke="#2050e0" stroke-width="1.200"/><path d="M3 -4 L7 -2" stroke="#e02020" stroke-width="1.200"/><path d="M3 -4 L7 -7" stroke="#20b020" stroke-width="1.200"/><path d="M-9 1 L-5 -4 L-5 -1.500 L1 -1.500 L1 1z" fill="#30b030" stroke="#106010" stroke-width="0.600" transform="rotate(40 -3 2)"/><path d="M1 6 L-3 10 L-3 7.800 L-9 7.800 L-9 5z" fill="#30b030" stroke="#106010" stroke-width="0.600" transform="rotate(40 -3 5)"/></svg>
<svg class="ic" style="left:618.0px;top:67.0px" width="22" height="22" viewBox="-11.0 -11.0 22 22"><rect x="-9.0" y="-9.0" width="5.200" height="5.200" fill="#20c8c8"/><rect x="-2.7" y="-9.0" width="5.200" height="5.200" fill="#e0e020"/><rect x="3.6" y="-9.0" width="5.200" height="5.200" fill="#10a040"/><rect x="-9.0" y="-2.7" width="5.200" height="5.200" fill="#e89040"/><rect x="-2.7" y="-2.7" width="5.200" height="5.200" fill="#a02020"/><rect x="3.6" y="-2.7" width="5.200" height="5.200" fill="#e020e0"/><rect x="-9.0" y="3.6" width="5.200" height="5.200" fill="#2040d0"/><rect x="-2.7" y="3.6" width="5.200" height="5.200" fill="#20e060"/><rect x="3.6" y="3.6" width="5.200" height="5.200" fill="#603848"/></svg>
<svg class="ic" style="left:643.0px;top:67.0px" width="22" height="22" viewBox="-11.0 -11.0 22 22"><rect x="-8" y="-8.500" width="16" height="17" fill="#e8ecf8" stroke="#101828" stroke-width="1.600"/><path d="M-6 -6h5M-6 -4h5M1 -6h5M1 -4h5" stroke="#202020" stroke-width="1"/><rect x="-6" y="-1" width="2.500" height="2.500" fill="#e04040"/><rect x="-6" y="2" width="2.500" height="2.500" fill="#20c020"/><rect x="-6" y="5" width="2.500" height="2.500" fill="#2040e0"/><path d="M-2 0h8M-2 2.500h8M-2 5h8M-2 7h8" stroke="#c09000" stroke-width="1.100"/></svg>
<svg class="ic" style="left:670.0px;top:67.0px" width="22" height="22" viewBox="-11.0 -11.0 22 22"><circle cx="0" cy="0" r="9" fill="#58a838" stroke="#387818" stroke-width="0.800"/><path d="M-6 7 L5 -5" stroke="#d8dce4" stroke-width="3"/><circle cx="5.500" cy="-5.500" r="3" fill="#d8dce4"/><path d="M6 7 L-4 -4" stroke="#2858b8" stroke-width="2.600"/><path d="M-7 -7 L-3 -3" stroke="#e8ecf4" stroke-width="2.200"/></svg>
<svg class="ic" style="left:696.0px;top:67.0px" width="22" height="22" viewBox="-11.0 -11.0 22 22"><rect x="-9" y="-8" width="16" height="16" fill="none" stroke="#183868" stroke-width="1.400" stroke-dasharray="1.400 2.200"/><path d="M-4 0 Q-3 -6 3 -6 L9 -5 L9 0 L4 1 L0 4 L-3 3z" fill="#f0b878" stroke="#a06828" stroke-width="0.700"/><circle cx="-5.500" cy="5" r="3.200" fill="#f4e020" stroke="#2040c0" stroke-width="0.600"/><path d="M-5.500 2.500v5M-8 5h5" stroke="#2040c0" stroke-width="1.200"/></svg>
<svg class="ic" style="left:722.0px;top:67.0px" width="22" height="22" viewBox="-11.0 -11.0 22 22"><path d="M-9 4 L2 -9 L9 -2 L0 9z" fill="#3858e0" stroke="#8090c8" stroke-width="0.600"/><path d="M-5.300 -0.300 L3.500 7 M-1.700 -4.700 L6.500 2.500 M-4 6 L5.500 -5.500 M-6.500 5.500 L4 -7" stroke="#d060e0" stroke-width="1" opacity="0.900"/><path d="M0 9 L9 -2 L10 0 L1 10z" fill="#788098"/></svg>
<svg class="ic" style="left:765.0px;top:67.0px" width="22" height="22" viewBox="-11.0 -11.0 22 22"><rect x="1" y="-9" width="6" height="7" fill="#707880"/><rect x="0.500" y="-2" width="7" height="3" fill="#b040b0"/><rect x="1" y="1" width="6" height="8" fill="#808890"/><path d="M4 -9v18" stroke="#c03030" stroke-width="0.700" stroke-dasharray="1.500 1"/><path d="M-8 9 L-1 1" stroke="#989ca8" stroke-width="3"/><path d="M-2 0 Q-8 -2 -6 -7 L-8 -7.500 L-4 -10 L-3 -5.500 L-4.500 -6 Q-5 -3 -1 -2z" fill="#20b040" stroke="#107020" stroke-width="0.500"/><path d="M-9 10 L-3 3" stroke="#b030a0" stroke-width="1"/></svg>
<svg class="ic" style="left:791.0px;top:67.0px" width="22" height="22" viewBox="-11.0 -11.0 22 22"><path d="M-8 -8 L2 -2.500 L-8 3z" fill="#70c848" stroke="#409020" stroke-width="0.700"/><circle cx="-1" cy="4.500" r="3.600" fill="none" stroke="#8888b0" stroke-width="2.200"/><circle cx="5.500" cy="-0.500" r="2.800" fill="none" stroke="#9898b8" stroke-width="1.800"/><circle cx="-1" cy="4.500" r="5" fill="none" stroke="#8888b0" stroke-width="1.200" stroke-dasharray="1.500 1.500"/><circle cx="5.500" cy="-0.500" r="4" fill="none" stroke="#9898b8" stroke-width="1" stroke-dasharray="1.300 1.300"/></svg>
<svg class="ic" style="left:817.0px;top:67.0px" width="22" height="22" viewBox="-11.0 -11.0 22 22"><path d="M-9 4 L0 0 L9 4 L0 8z" fill="#f0e020" stroke="#000" stroke-width="0.800"/><path d="M-9 4v2.500L0 10.500 L9 6.500V4L0 8z" fill="#c8b800" stroke="#000" stroke-width="0.800"/><path d="M-9 -0.500 L0 -4.500 L9 -0.500 L0 3.500z" fill="#e88820" stroke="#000" stroke-width="0.800"/><path d="M-9 -0.500v3L0 6.500 L9 2.500v-3L0 3.500z" fill="#c06810" stroke="#000" stroke-width="0.800"/><path d="M-4 -2v-6M3 -2.500v-5" stroke="#202020" stroke-width="2.200"/><path d="M-1 0 L1 -1.500" stroke="#000" stroke-width="1"/></svg>
<svg class="ic" style="left:2px;top:2px" width="18" height="18" viewBox="0 0 18 18"><path d="M2.500 4 L6.500 4 L9 12.500 L12.500 3 L15.500 3.500 L11 16.500 L7 16.500z" fill="#a8ac98" stroke="#787c68" stroke-width="0.800"/><path d="M4 5 L6 5 L8.500 13.500" stroke="#e4e8d8" stroke-width="1" fill="none"/><circle cx="3.200" cy="3.500" r="2" fill="#58c030" stroke="#388818" stroke-width="0.500"/></svg>
<div class="abs" style="left:20px;top:6px;width:1px;height:12px;background:#a8a8a8"></div><div class="abs" style="left:48px;top:6px;width:1px;height:12px;background:#a8a8a8"></div>
<svg class="ic" style="left:30px;top:8px" width="9" height="8" viewBox="0 0 9 8"><rect x="0.500" y="0.500" width="7.500" height="1.400" fill="#000"/><path d="M1 3.500h6.500L4.250 7z" fill="#000"/></svg>
<svg class="ic" style="left:1774px;top:3px" width="14" height="12" viewBox="0 0 14 12"><path d="M1 5.500h12M1 5.500l3-2.500v5zM13 5.500l-3-2.500v5z" stroke="#000" stroke-width="1.300" fill="#000"/></svg>
<div class="abs" style="left:1828px;top:11px;width:8px;height:2px;background:#000"></div>
<svg class="ic" style="left:1852px;top:3px" width="12" height="12" viewBox="0 0 12 12"><path d="M3.500 3V1.500H10.500V8.500H9" stroke="#000" stroke-width="1.200" fill="none"/><rect x="1.500" y="3.600" width="7" height="6.800" fill="none" stroke="#000" stroke-width="1.300"/></svg>
<div class="abs" style="left:1872px;top:0;width:45px;height:19px;background:#c75050"></div>
<svg class="ic" style="left:1888px;top:4px" width="13" height="12" viewBox="0 0 13 12"><path d="M2 1.500L11 10.500M11 1.500L2 10.500" stroke="#fff" stroke-width="2"/></svg>
<div class="abs" style="left:1870px;top:35px;width:9px;height:2px;background:#a09888"></div>
<svg class="ic" style="left:1887px;top:27px" width="12" height="11" viewBox="0 0 12 11"><path d="M3.500 3V1H10.500V7.500H9" stroke="#a09888" stroke-width="1.100" fill="none"/><rect x="1" y="3.300" width="7.500" height="6.500" fill="none" stroke="#a09888" stroke-width="1.200"/></svg>
<svg class="ic" style="left:1906px;top:28px" width="9" height="9" viewBox="0 0 9 9"><path d="M1 1L8 8M8 1L1 8" stroke="#a09888" stroke-width="1.800"/></svg>
<svg class="ic" style="left:17px;top:52px" width="9" height="6" viewBox="0 0 9 6"><path d="M0.500 0.500h8L4.500 5z" fill="#000"/></svg>
<svg class="ic" style="left:7.0px;top:131.0px" width="22" height="22" viewBox="-11.0 -11.0 22 22"><path d="M-1 3 L-7 8.500" stroke="#b0b4bc" stroke-width="2.600" stroke-linecap="round"/><circle cx="3" cy="-2" r="5.500" fill="#c4d8f0" stroke="#7c98c4" stroke-width="1.400"/><circle cx="3" cy="-2" r="3.300" fill="#a8c4e8"/><path d="M-7 -7 Q-4 -8 -2 -6 M-8 -4 Q-5 -5 -3 -3 M-8 -1 Q-6 -1 -4 0 M-7 2 Q-5 2 -3 3" stroke="#98a0b4" stroke-width="1.100" fill="none"/><ellipse cx="1" cy="8.500" rx="7" ry="1.200" fill="#707888" opacity="0.350"/></svg>
<svg class="ic" style="left:33.0px;top:131.0px" width="22" height="22" viewBox="-11.0 -11.0 22 22"><path d="M-7 -7 L-5.500 -5 M-3.500 -3 L6 7 M-2 -6.500 L7 4" stroke="#3a6ad8" stroke-width="2"/><path d="M-5.500 6.500 L3.500 -5.500 L6.500 -3.500 L-2.500 8.500 L-6.500 10z" fill="#d49a3c" stroke="#6a4010" stroke-width="0.700"/><path d="M-4 7.500 L5 -4.500" stroke="#f0c878" stroke-width="0.800"/><path d="M3.500 -5.500 L5 -7.500 L8 -5.500 L6.500 -3.500z" fill="#d83030" stroke="#6a1010" stroke-width="0.400"/><path d="M-5.500 6.500 L-6.500 10 L-2.500 8.500z" fill="#e8d0a0" stroke="#6a4010" stroke-width="0.400"/><path d="M-6.500 10 L-5.600 8 L-4.600 9.200z" fill="#202020"/><ellipse cx="0" cy="9.500" rx="7" ry="1.300" fill="#707888" opacity="0.450"/><path d="M4 -10h5l-2.500 3z" fill="#000"/></svg>
<svg class="ic" style="left:7.0px;top:157.0px" width="22" height="22" viewBox="-11.0 -11.0 22 22"><rect x="-6.500" y="-5.500" width="13" height="11" fill="#e4ecfa" stroke="#8890a0" stroke-width="1.200"/><rect x="-5" y="-4" width="10" height="4" fill="#f6f8fe" opacity="0.800"/><g fill="#38c038" stroke="#1c8c1c" stroke-width="0.500"><rect x="-9.500" y="-8.500" width="3.600" height="3.600"/><rect x="5.900" y="-8.500" width="3.600" height="3.600"/><rect x="-9.500" y="4.900" width="3.600" height="3.600"/><rect x="5.900" y="4.900" width="3.600" height="3.600"/></g></svg>
<svg class="ic" style="left:33.0px;top:157.0px" width="22" height="22" viewBox="-11.0 -11.0 22 22"><path d="M-2 -7 Q-8 -9 -8 -3 Q-7 1 -1 0 Q6 -1 7 4 Q6 9 0 7 Q-3 5 -1 1" stroke="#3a6ad8" stroke-width="2" fill="none"/><path d="M-5.500 6.500 L3.500 -5.500 L6.500 -3.500 L-2.500 8.500 L-6.500 10z" fill="#d49a3c" stroke="#6a4010" stroke-width="0.700"/><path d="M-4 7.500 L5 -4.500" stroke="#f0c878" stroke-width="0.800"/><path d="M3.500 -5.500 L5 -7.500 L8 -5.500 L6.500 -3.500z" fill="#d83030" stroke="#6a1010" stroke-width="0.400"/><path d="M-5.500 6.500 L-6.500 10 L-2.500 8.500z" fill="#e8d0a0" stroke="#6a4010" stroke-width="0.400"/><path d="M-6.500 10 L-5.600 8 L-4.600 9.200z" fill="#202020"/><ellipse cx="0" cy="9.500" rx="7" ry="1.300" fill="#707888" opacity="0.450"/><path d="M4 -10h5l-2.500 3z" fill="#000"/></svg>
<svg class="ic" style="left:7.0px;top:183.0px" width="22" height="22" viewBox="-11.0 -11.0 22 22"><path d="M-3 2 L-9 8" stroke="#b4b8c0" stroke-width="2.600" stroke-linecap="round"/><path d="M1 2 L5 0 L9 2 L9 7 L5 9.500 L1 7z" fill="#606468" stroke="#383c40" stroke-width="0.500"/><path d="M1 2 L5 4 L5 9.500 L1 7z" fill="#8c9094"/><circle cx="0.500" cy="-2.500" r="5.200" fill="#c8dcf0" stroke="#7c98c4" stroke-width="1.400"/><path d="M-1 -5 L3 -2.500 L-1 0z" fill="#9cb8dc"/><path d="M-10 -8h3.600M-8.200 -9.800v3.600M-10 -4.500h3.600" stroke="#000" stroke-width="0.900"/><path d="M4 -10h5l-2.500 3z" fill="#000"/></svg>
<svg class="ic" style="left:33.0px;top:183.0px" width="22" height="22" viewBox="-11.0 -11.0 22 22"><path d="M-6.500 -7.500 H6.500 V2 H1 V4.500 H6 V8 H-6.500 Z" fill="#d6dbe9" stroke="#f4ec00" stroke-width="1.800"/><path d="M-6.500 -7.500 H6.500 V2 H1 V4.500 H6 V8 H-6.500 Z" fill="none" stroke="#a8a000" stroke-width="0.400"/><path d="M-9 -3 L-4.500 2.500 L5 -9" stroke="#38c838" stroke-width="2.600" fill="none"/><path d="M4 -10h5l-2.500 3z" fill="#000"/></svg>
<svg class="ic" style="left:7.0px;top:209.0px" width="22" height="22" viewBox="-11.0 -11.0 22 22"><path d="M-9 3 L1 -5 L9 -1 L0 8z" fill="#e4eaf4" stroke="#a8b0c0" stroke-width="0.700"/><path d="M-4 3 L-4 -8" stroke="#2050e0" stroke-width="1.500"/><path d="M-6 -6 L-4 -9.500 L-2 -6z" fill="#2050e0"/><path d="M-4 3 L4 -2" stroke="#20b020" stroke-width="1.500"/><path d="M-4 3 L3 8" stroke="#e02020" stroke-width="1.500"/><circle cx="-4" cy="3" r="1.600" fill="#fff" stroke="#404040" stroke-width="0.700"/><path d="M4 -10h5l-2.500 3z" fill="#000"/></svg>
<svg class="ic" style="left:33.0px;top:209.0px" width="22" height="22" viewBox="-11.0 -11.0 22 22"><path d="M-8 3 Q-8 -9 -4 -7 Q-1 -5 1 2 Q3 9 6 7 Q8 5 7 -2" stroke="#3a6ad8" stroke-width="2" fill="none"/><path d="M-5.500 6.500 L3.500 -5.500 L6.500 -3.500 L-2.500 8.500 L-6.500 10z" fill="#d49a3c" stroke="#6a4010" stroke-width="0.700"/><path d="M-4 7.500 L5 -4.500" stroke="#f0c878" stroke-width="0.800"/><path d="M3.500 -5.500 L5 -7.500 L8 -5.500 L6.500 -3.500z" fill="#d83030" stroke="#6a1010" stroke-width="0.400"/><path d="M-5.500 6.500 L-6.500 10 L-2.500 8.500z" fill="#e8d0a0" stroke="#6a4010" stroke-width="0.400"/><path d="M-6.500 10 L-5.600 8 L-4.600 9.200z" fill="#202020"/><ellipse cx="0" cy="9.500" rx="7" ry="1.300" fill="#707888" opacity="0.450"/><path d="M4 -10h5l-2.500 3z" fill="#000"/></svg>
<svg class="ic" style="left:7.0px;top:235.0px" width="22" height="22" viewBox="-11.0 -11.0 22 22"><ellipse cx="0" cy="4" rx="8" ry="5" fill="#c8a078" stroke="#705030" stroke-width="0.800"/><circle cx="-3.500" cy="5" r="1.800" fill="#2040e0"/><circle cx="1" cy="6" r="1.800" fill="#20b020"/><circle cx="4.500" cy="3" r="1.800" fill="#e02020"/><path d="M3 2 L9 -8" stroke="#8a5020" stroke-width="1.800"/><path d="M-8 -7h9l2 2h-9z M-8 -4h9l2 2h-9z M-8 -1h9l2 2h-9z" fill="#8890f0" stroke="#fff" stroke-width="0.500"/><path d="M4 -10h5l-2.500 3z" fill="#000"/></svg>
<svg class="ic" style="left:33.0px;top:235.0px" width="22" height="22" viewBox="-11.0 -11.0 22 22"><path d="M-8 8 L-4 -6 L8 -8 L6 5z" fill="#4878e8" stroke="#2040a0" stroke-width="0.800"/><path d="M-6 1 L7 -1.500 M1 -7 L-1 6.500" stroke="#c8dcff" stroke-width="1.200"/><path d="M4 -10h5l-2.500 3z" fill="#000"/></svg>
<svg class="ic" style="left:7.0px;top:261.0px" width="22" height="22" viewBox="-11.0 -11.0 22 22"><path d="M-7 -1 Q-7 -7 0 -7 L0 -9 L6 -5 L0 -1 L0 -3.500 Q-3 -3.500 -3 -1z" fill="#6098d8" stroke="#3868a8" stroke-width="0.600"/><path d="M7 1 Q7 8 0 8 L0 10 L-6 6 L0 2 L0 4.500 Q3 4.500 3 1z" fill="#6098d8" stroke="#3868a8" stroke-width="0.600"/><path d="M4 -10h5l-2.500 3z" fill="#000"/></svg>
<svg class="ic" style="left:33.0px;top:261.0px" width="22" height="22" viewBox="-11.0 -11.0 22 22"><path d="M-7 -4 L1 -7 L8 -4 L8 5 L0 9 L-7 5z" fill="#a0a4a8" stroke="#484c50" stroke-width="0.800"/><path d="M-7 -4 L0 -1 L8 -4 M0 -1 L0 9" stroke="#484c50" stroke-width="0.800" fill="none"/><path d="M-7 -4 L0 -1 L0 9 L-7 5z" fill="#c4c8cc"/><path d="M0 -1 L8 -4 L8 5 L0 9z" fill="#787c80"/><path d="M4 -10h5l-2.500 3z" fill="#000"/></svg>
<svg class="ic" style="left:7.0px;top:287.0px" width="22" height="22" viewBox="-11.0 -11.0 22 22"><text x="-6" y="7" font-family="Liberation Sans, sans-serif" font-weight="bold" font-size="19" fill="#4070c8">?</text><ellipse cx="0" cy="9" rx="6" ry="1.500" fill="#a0a8b8" opacity="0.600"/><path d="M4 -10h5l-2.500 3z" fill="#000"/></svg>
<svg class="ic" style="left:33.0px;top:287.0px" width="22" height="22" viewBox="-11.0 -11.0 22 22"><path d="M-8 -6v15M8 -6v15" stroke="#202020" stroke-width="1.400"/><path d="M-8 -3h16" stroke="#e8d800" stroke-width="1.800"/><path d="M-8 -3l3 -2v4zM8 -3l-3 -2v4z" fill="#c0a800"/><path d="M4 -10h5l-2.500 3z" fill="#000"/></svg>
<svg class="ic" style="left:7.0px;top:313.0px" width="22" height="22" viewBox="-11.0 -11.0 22 22"><path d="M-6 -4h12l-1.500 13h-9z" fill="#a8d0e8" stroke="#6088a8" stroke-width="0.800"/><rect x="-7" y="-6" width="14" height="2.500" fill="#90b8d8" stroke="#6088a8" stroke-width="0.600"/><path d="M-2 0 L2 4 M2 0 L-2 4 M0 5 L0 8" stroke="#e8f080" stroke-width="1.200"/><path d="M-1 -9h2.500v3h-2.500z" fill="#f0e020"/><path d="M4 -10h5l-2.500 3z" fill="#000"/></svg>
<svg class="ic" style="left:33.0px;top:313.0px" width="22" height="22" viewBox="-11.0 -11.0 22 22"><path d="M4 9 Q9 2 2 -2 L-1 -2 L-1 -6 L-8 0 L-1 5 L-1 2 Q4 3 4 9z" fill="#6098d8" stroke="#3868a8" stroke-width="0.700"/><path d="M4 -10h5l-2.500 3z" fill="#000"/></svg>
<svg class="ic" style="left:7.0px;top:339.0px" width="22" height="22" viewBox="-11.0 -11.0 22 22"><rect x="-9" y="-8" width="3" height="17" fill="#707880"/><circle cx="1" cy="0" r="5.500" fill="none" stroke="#704820" stroke-width="1.600"/><path d="M1 -8v16M-7 0h16M-4.500 -5.500l11 11M6.500 -5.500l-11 11" stroke="#704820" stroke-width="1.200"/><circle cx="1" cy="0" r="1.800" fill="#a07040"/><path d="M-6 9 Q0 4 6 9z" fill="#f08020"/><path d="M4 -10h5l-2.500 3z" fill="#000"/></svg>
<svg class="ic" style="left:33.0px;top:339.0px" width="22" height="22" viewBox="-11.0 -11.0 22 22"><path d="M-8 0 L-8 9 L8 9 L8 -1 L4 -1" fill="#fff" stroke="#000" stroke-width="1.200"/><path d="M-9 -6h6l1.500 2h6v8h-13.500z" fill="#f8d870" stroke="#c89820" stroke-width="0.700"/><path d="M-3 -6 Q1 -10 5 -7 L6 -9 L7.500 -4 L2.500 -4 L4 -5.500 Q1 -7.500 -1 -5z" fill="#30b030" stroke="#187818" stroke-width="0.500"/></svg>
<svg class="ic" style="left:1218.0px;top:1031.0px" width="20" height="20" viewBox="-10.0 -10.0 20 20"><rect x="-8" y="-8" width="16" height="16" rx="1.500" fill="#ccced8" stroke="#8c90a0" stroke-width="1.300"/><path d="M-4 -1 Q-4 -5 1 -5 L1 -6.500 L5 -3.500 L1 -1 L1 -2.500 Q-2 -2.500 -2 -1z M4 1 Q4 5 -1 5 L-1 6.500 L-5 3.500 L-1 1 L-1 2.500 Q2 2.500 2 1z" fill="#f0a8b0" stroke="#d84858" stroke-width="0.800"/></svg>
<div class="abs" style="left:1250px;top:1032px;width:18px;height:18px;background:#f8e070"></div>
<svg class="ic" style="left:1249.0px;top:1031.0px" width="20" height="20" viewBox="-10.0 -10.0 20 20"><path d="M-2 -9 L0 -4 L5 -7 L3 -2 L8 0 L3 1 L-7 -2 L-3 -4 L-7 -8z" fill="#d050d0" stroke="#e08020" stroke-width="0.600"/><path d="M-3 -3 L6 6 L3 6.500 L5 10 L3 10.500 L1 7.500 L-1 9z" fill="#c8c8d0" stroke="#606068" stroke-width="0.700"/></svg>
<svg class="ic" style="left:1280.0px;top:1031.0px" width="20" height="20" viewBox="-10.0 -10.0 20 20"><path d="M-7 -1 L1 -7 L8 -4 L8 -1 L2 1 L-1 -1 L-4 1z" fill="#f0b878" stroke="#a06828" stroke-width="0.700"/><rect x="-7" y="0" width="9" height="9" fill="#e8ecf8" stroke="#404858" stroke-width="0.800"/><path d="M-5 4h5M-2.500 2v5" stroke="#2050c0" stroke-width="1.100"/><circle cx="-4.500" cy="7" r="1" fill="#2050c0"/></svg>
<svg class="ic" style="left:1311.0px;top:1031.0px" width="20" height="20" viewBox="-10.0 -10.0 20 20"><text x="-6" y="6" font-family="Liberation Sans, sans-serif" font-weight="bold" font-size="18" fill="#3868c0">?</text><ellipse cx="0" cy="8.500" rx="6" ry="1.400" fill="#a0a8b8" opacity="0.700"/></svg>
<svg class="ic" style="left:1342.0px;top:1031.0px" width="20" height="20" viewBox="-10.0 -10.0 20 20"><g transform="translate(-3 -4)"><path d="M-4 -2 L0 -4 L4 -2 L4 3 L0 5 L-4 3z" fill="#6898e0" stroke="#203040" stroke-width="0.700"/><path d="M-4 -2 L0 0 L4 -2 M0 0 L0 5" stroke="#203040" stroke-width="0.700" fill="none"/></g><g transform="translate(4 3)"><path d="M-4 -2 L0 -4 L4 -2 L4 3 L0 5 L-4 3z" fill="#6090a0" stroke="#203040" stroke-width="0.700"/><path d="M-4 -2 L0 0 L4 -2 M0 0 L0 5" stroke="#203040" stroke-width="0.700" fill="none"/></g><path d="M-9 1h7M-5 -2l4 3l-4 3M-8 -2l3 3l-3 3" stroke="#e01010" stroke-width="1.400" fill="none"/></svg>
<div class="abs" style="left:1374px;top:1032px;width:18px;height:18px;background:#f8e070"></div>
<svg class="ic" style="left:1373.0px;top:1031.0px" width="20" height="20" viewBox="-10.0 -10.0 20 20"><path d="M-7 -4 L0 -7 L7 -4 L0 -1z" fill="#e040e0" stroke="#203060" stroke-width="0.700"/><path d="M-7 -4 L0 -1 L0 8 L-7 5z" fill="#4080c8" stroke="#203060" stroke-width="0.700"/><path d="M0 -1 L7 -4 L7 5 L0 8z" fill="#70b8b0" stroke="#203060" stroke-width="0.700"/></svg>
<svg class="ic" style="left:1404.0px;top:1031.0px" width="20" height="20" viewBox="-10.0 -10.0 20 20"><rect x="-5" y="-8" width="10" height="16" fill="#c8ccd0" stroke="#505860" stroke-width="1"/><path d="M-5 -3h10M-5 2h10" stroke="#505860" stroke-width="1"/><rect x="-4" y="-2" width="8" height="3.500" fill="#f0a030"/></svg>
<svg class="ic" style="left:1435.0px;top:1031.0px" width="20" height="20" viewBox="-10.0 -10.0 20 20"><path d="M0 -6 A6.500 6.500 0 1 1 -6 1" fill="none" stroke="#208828" stroke-width="2.200"/><path d="M0 -9.500 L0 -2.500 L-5 -6z" fill="#208828"/><path d="M0 -1v5M-2.500 1.500h5" stroke="#2030a0" stroke-width="1.300"/></svg>
<svg class="ic" style="left:1466.0px;top:1031.0px" width="20" height="20" viewBox="-10.0 -10.0 20 20"><rect x="-8" y="-8" width="16" height="16" fill="#dfe3ee" stroke="#3a4050" stroke-width="1.200"/><path d="M0 -8v16M-8 0h16" stroke="#2a3040" stroke-width="1.300"/></svg>
<svg class="ic" style="left:1472px;top:1016px" width="13" height="13" viewBox="0 0 13 13"><circle cx="8" cy="5" r="3.600" fill="#eef4ff" stroke="#4878b8" stroke-width="1.300"/><path d="M5.500 7.500L1.500 11.500" stroke="#4878b8" stroke-width="1.600"/></svg>
<svg class="ic" style="left:1894px;top:1014px" width="17" height="17" viewBox="0 0 17 17"><circle cx="8.500" cy="8.500" r="7" fill="#1838a8" stroke="#102060" stroke-width="0.600"/><path d="M4 4 Q7 2 9 4 Q8 7 5 8 Q3 7 4 4z M9 8 Q13 7 13.500 10 Q12 14 9 13 Q8 10 9 8z M11 3 Q13 4 14 6 L12 6z" fill="#38c030"/><circle cx="6" cy="5" r="1.500" fill="#fff" opacity="0.500"/></svg>
</body>
</html>
